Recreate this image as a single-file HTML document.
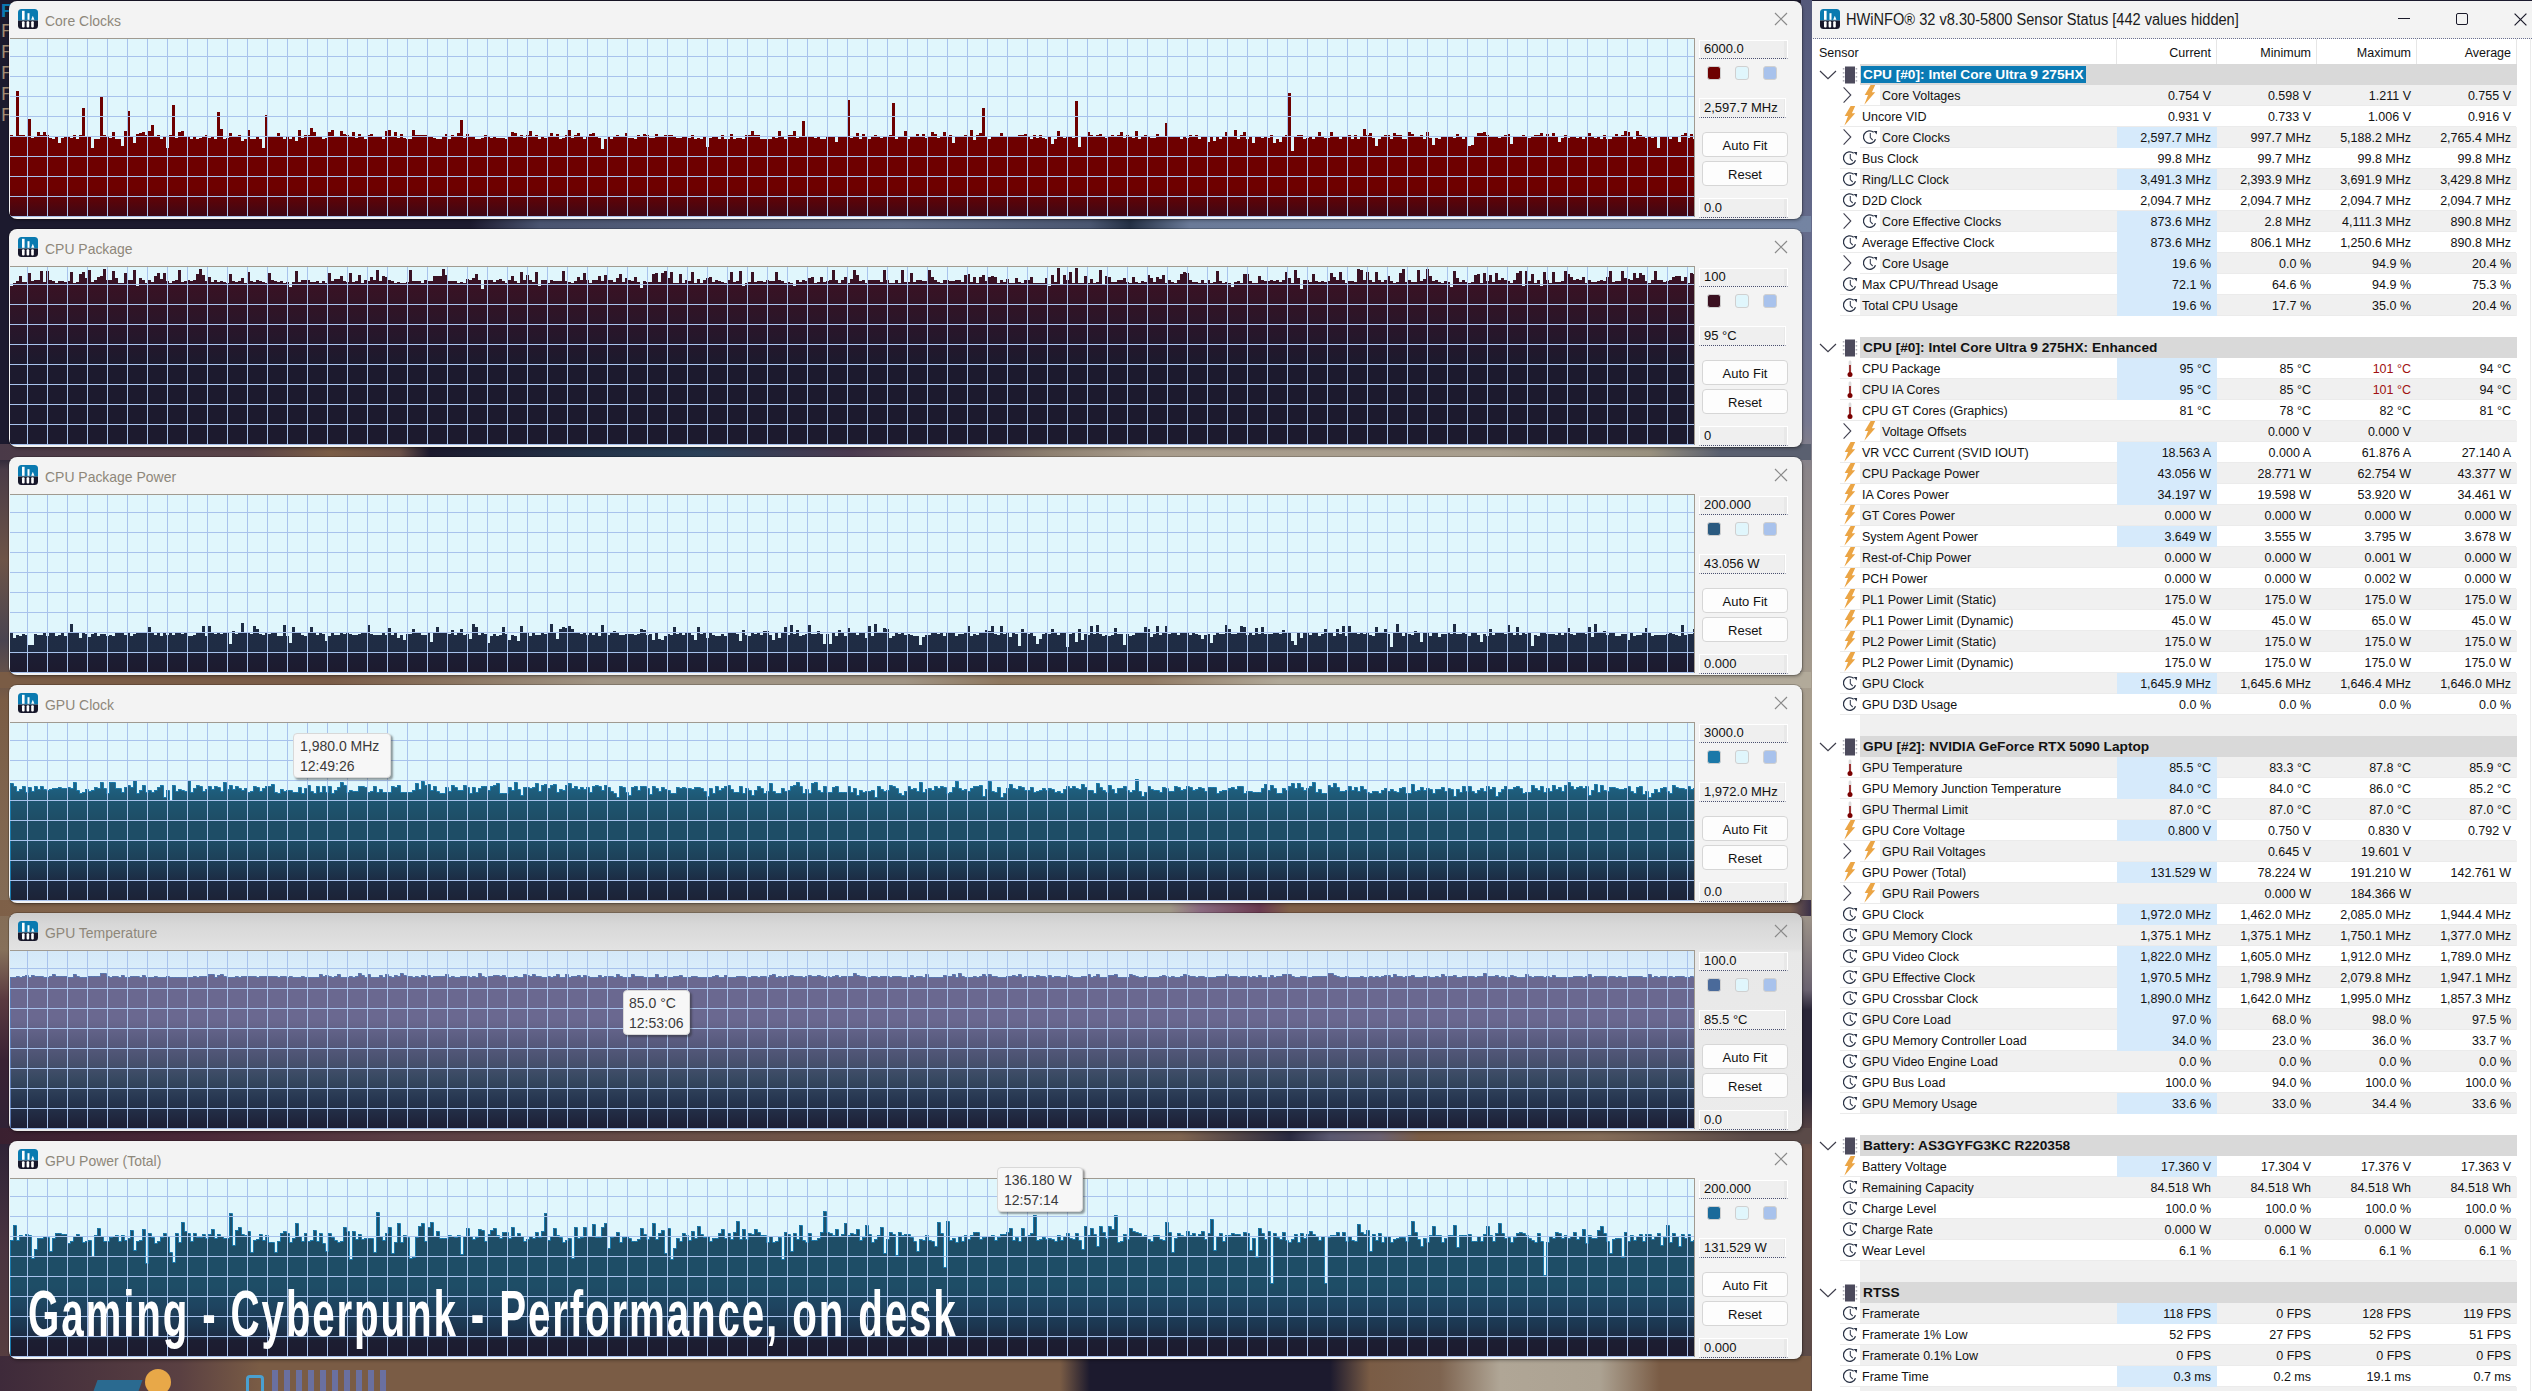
<!DOCTYPE html><html><head><meta charset="utf-8"><style>
*{margin:0;padding:0;box-sizing:border-box}
html,body{width:2532px;height:1391px;overflow:hidden}
body{position:relative;font-family:"Liberation Sans",sans-serif;background:#1c1a2e}
.wall{position:absolute;left:0;top:0;width:1811px;height:1391px;background:#1c1a2e}
.wb{position:absolute}
.tip{position:absolute;background:#f7f7f7;border:1px solid #d8d8d8;border-radius:4px;box-shadow:2px 2px 2px rgba(40,40,40,0.45);
 font-size:14px;line-height:20px;color:#3a3a3a;white-space:nowrap;padding-left:6px}
.gw{position:absolute;left:9px;width:1793px;height:218px;background:#f3f3f3;border-radius:8px;
 box-shadow:0 0 0 1px rgba(0,0,0,0.18),1px 2px 3px rgba(0,0,0,0.25);overflow:hidden}
.gw.inact{background:linear-gradient(180deg,#cdcdcd 0px,#d8d8d8 12px,#e2e2e2 36px,#e8e8e8 40px,#ececec 218px)}
.gicon{position:absolute;left:9px;top:8px;width:20px;height:20px}
.gicon svg{display:block}
.gtitle{position:absolute;left:36px;top:10px;font-size:15px;color:#8e877a;white-space:nowrap;line-height:19px;transform-origin:0 0;transform:scaleX(0.93)}
.gclose{position:absolute;left:1765px;top:11px}
.garea{position:absolute;left:1px;top:37px;width:1685px;height:179px;border-top:1px solid #a09a90;border-right:1px solid #a09a90;overflow:hidden}
.gsvg{display:block;position:absolute;left:0;top:0}
.vbox{position:absolute;left:1690px;width:89px;height:19px;background:linear-gradient(90deg,#efefef 0,#efefef 84px,#e8e8e8 84px);border:1px solid #fff;border-bottom:1px dotted #4a5070;
 font-size:13px;line-height:16px;padding-left:4px;color:#111;white-space:nowrap}
.vmax{top:39px}.vcur{top:97px;width:87px;height:20px;line-height:17px}.vmin{top:197px;height:20px;line-height:18px}
.sw{position:absolute;top:65px;width:14px;height:14px;border-radius:3px;border:1px solid #d0d0d0}
.ovl{position:absolute;left:28px;top:1274px;font-size:65px;font-weight:bold;line-height:80px;letter-spacing:3px;color:#fff;white-space:nowrap;transform-origin:0 0;transform:scaleX(0.62)}
.btn{position:absolute;left:1693px;width:86px;height:25px;background:#fdfdfd;border:1px solid #d6d6d6;border-radius:4px;
 font-size:13px;line-height:25px;text-align:center;color:#111}

.hw{position:absolute;left:1811px;top:1px;width:1721px;height:1390px;background:#fff;overflow:hidden;clip-path:inset(0 0 0 1px)}
.hwtitle{position:absolute;left:0;top:0;width:100%;height:38px;background:#f3f3f3;border-bottom:1px dotted #6a7090}
.hwtt{position:absolute;top:8px;font-size:16px;line-height:22px;color:#1a1a1a;white-space:nowrap;transform-origin:0 0;transform:scaleX(0.912)}
.hdr{position:absolute;top:44px;font-size:12.5px;line-height:16px;color:#111;white-space:nowrap}
.hv{width:95px;text-align:right}
.hsep{position:absolute;top:38px;width:1px;height:25px;background:#e6e6e6}
.rg{position:absolute;left:49px;width:657px;height:21px;background:#d9d9d9}
.rb{position:absolute;height:21px;background:#f0f0f0}
.rs{position:absolute;height:1px;background:#ebebeb}
.hl{position:absolute;left:306px;width:100px;height:21px;background:#d6eafb}
.ic{position:absolute}
.ic svg{display:block}
.gt{position:absolute;font-size:13.7px;font-weight:bold;line-height:17px;padding:0 2px;color:#111;white-space:nowrap}
.gt.sel{background:#0a7ab4;color:#fff}
.tx{position:absolute;font-size:12.5px;line-height:23px;color:#111;white-space:nowrap}
.vv{position:absolute;width:95px;text-align:right;font-size:12.5px;line-height:23px;color:#111;white-space:nowrap}
</style></head><body><div class="wall"></div><div class="wb" style="left:0;top:0;width:10px;height:1391px;background:linear-gradient(180deg,#1c1a2e 0px,#1c1a2e 450px,#4a3c48 470px,#6e5448 560px,#4a4450 640px,#7a5c45 700px,#86705a 950px,#5a3a40 1000px,#3a2234 1060px,#2e2236 1140px,#4a3440 1250px,#5a4040 1391px)"></div><div class="wb" style="left:1801px;top:0;width:11px;height:1391px;background:linear-gradient(180deg,#54597a 0px,#6a7090 300px,#767890 420px,#8a8488 470px,#a89e8e 700px,#a89e8e 900px,#6a6270 990px,#2a2638 1010px,#2a2638 1090px,#6a5048 1150px,#5a4a48 1391px)"></div><div class="wb" style="left:0;top:216px;width:1811px;height:16px;background:linear-gradient(90deg,#1c1a2e 0px,#1c1a2e 470px,#4a5470 540px,#5e6a86 900px,#4a5670 1090px,#243044 1130px,#6a7a98 1190px,#7080a0 1500px,#7484a2 1811px)"></div><div class="wb" style="left:0;top:444px;width:1811px;height:16px;background:linear-gradient(90deg,#4a3a48 0px,#5a4448 250px,#7a5c45 330px,#6a5048 400px,#1c1a2e 430px,#24344a 600px,#2a4058 700px,#4a3a50 850px,#6a5a5a 960px,#8e8070 1050px,#a89c8c 1150px,#a89e8e 1500px,#98907e 1650px,#5a6070 1720px,#5a6070 1811px)"></div><div class="wb" style="left:0;top:672px;width:1811px;height:16px;background:linear-gradient(90deg,#7a5c45 0px,#7a5c48 330px,#8a7460 450px,#a09484 600px,#a09484 905px,#8e7860 1000px,#927c66 1150px,#b0a898 1280px,#b2aa9a 1811px)"></div><div class="wb" style="left:0;top:900px;width:1811px;height:16px;background:linear-gradient(90deg,#7e6048 0px,#8a7058 300px,#92806c 700px,#a09888 950px,#a09888 1170px,#8a6a80 1200px,#6a3a50 1260px,#806048 1290px,#84664e 1700px,#7a6050 1790px,#3a3048 1811px)"></div><div class="wb" style="left:0;top:1128px;width:1811px;height:16px;background:linear-gradient(90deg,#3a2030 0px,#4a2838 200px,#5a3e44 400px,#6a5048 700px,#7a5c45 1000px,#7e6450 1180px,#2a2a40 1290px,#5a5870 1330px,#6a6070 1380px,#7a5c45 1420px,#846c58 1600px,#5a4a48 1750px,#5a4a48 1811px)"></div><div class="wb" style="left:0;top:1356px;width:1811px;height:35px;background:linear-gradient(90deg,#3e2a3a 0px,#5a4042 180px,#7a5c45 260px,#7a5c45 1060px,#1c1a2e 1090px,#1c1a2e 1330px,#7a5c45 1370px,#7e6450 1440px,#b0a696 1500px,#aca292 1600px,#7a5c45 1660px,#7a5c45 1811px)"></div><div class="wb" style="left:145px;top:1369px;width:26px;height:26px;border-radius:50%;background:#e8a848"></div><div class="wb" style="left:95px;top:1380px;width:45px;height:14px;background:#2a6a90;transform:skewX(-20deg)"></div><div class="wb" style="left:246px;top:1375px;width:18px;height:20px;border:3px solid #4aa0d0;border-bottom:none;border-radius:4px 4px 0 0"></div><div class="wb" style="left:272px;top:1370px;width:118px;height:22px;background:repeating-linear-gradient(90deg,#6a70a0 0px,#6a70a0 6px,#7a5c45 6px,#7a5c45 12px)"></div><div class="wb" style="left:1px;top:0;font-size:19px;line-height:21px;color:#0a78b0;font-weight:bold">F</div><div class="wb" style="left:1px;top:20px;font-size:19px;line-height:21px;color:#a08c74;font-family:Liberation Sans">F<br>F<br>F<br>F<br>F</div><div class="gw" style="top:1px"><div class="gicon"><svg width="20" height="20" viewBox="0 0 20 20"><defs><clipPath id="ic"><rect x="0" y="0" width="20" height="20" rx="3.5"/></clipPath></defs><g clip-path="url(#ic)"><rect width="20" height="11.5" fill="#0a7ab0"/><rect y="11.5" width="20" height="8.5" fill="#17172a"/><rect x="4" y="1.8" width="2.6" height="9" fill="#fff"/><rect x="9.5" y="4.2" width="2" height="6.6" fill="#fff"/><path d="M13.2,10.8 L14.8,6.8 L16.4,10.8Z" fill="#fff"/><rect x="4" y="12.3" width="2.6" height="6.2" rx="1" fill="#fff"/><rect x="8.6" y="12.3" width="2.6" height="6.2" rx="1" fill="#fff"/><rect x="13.2" y="12.3" width="2.6" height="6.2" rx="1" fill="#fff"/></g></svg></div><div class="gtitle">Core Clocks</div><svg class="gclose" width="14" height="14" viewBox="0 0 14 14"><path d="M1,1L13,13M13,1L1,13" stroke="#8a8a8a" stroke-width="1.2"/></svg><div class="garea"><svg class="gsvg" width="1685" height="178" viewBox="0 0 1685 178"><defs><linearGradient id="g0" x1="0" y1="0" x2="0" y2="178" gradientUnits="userSpaceOnUse"><stop offset="0.0000" stop-color="#6e0000"/><stop offset="0.8427" stop-color="#6e0000"/><stop offset="1.0000" stop-color="#3c0816"/></linearGradient><linearGradient id="bg0" x1="0" y1="0" x2="0" y2="1"><stop offset="0" stop-color="#e0f6fc"/></linearGradient></defs><rect width="1685" height="178" fill="url(#bg0)"/><path d="M0,178V96H3V97H6V52H9V96H12V96H15V97H18V80H21V99H24V98H27V93H30V96H33V93H36V96H39V99H42V100H45V98H48V104H51V99H54V98H57V97H60V99H63V96H66V100H69V96H72V69H75V97H78V98H81V109H84V100H87V100H90V58H93V96H96V97H99V99H102V93H105V100H108V100H111V107H114V92H117V72H120V97H123V104H126V95H129V94H132V93H135V96H138V92H141V86H144V98H147V96H150V100H153V97H156V109H159V96H162V66H165V99H168V93H171V92H174V98H177V97H180V100H183V97H186V100H189V99H192V97H195V96H198V99H201V97H204V100H207V73H210V90H213V100H216V99H219V94H222V98H225V97H228V96H231V102H234V100H237V91H240V100H243V100H246V97H249V100H252V109H255V76H258V97H261V98H264V97H267V94H270V98H273V100H276V97H279V100H282V98H285V102H288V91H291V99H294V96H297V96H300V89H303V93H306V97H309V97H312V100H315V99H318V93H321V91H324V98H327V98H330V92H333V95H336V96H339V97H342V93H345V99H348V95H351V97H354V100H357V96H360V95H363V97H366V97H369V98H372V100H375V92H378V91H381V97H384V93H387V99H390V95H393V99H396V100H399V100H402V91H405V96H408V96H411V96H414V96H417V97H420V97H423V99H426V100H429V100H432V97H435V95H438V100H441V96H444V97H447V94H450V81H453V99H456V95H459V98H462V98H465V100H468V100H471V99H474V96H477V98H480V99H483V98H486V99H489V99H492V99H495V100H498V97H501V93H504V94H507V98H510V96H513V99H516V96H519V92H522V97H525V96H528V100H531V97H534V99H537V97H540V94H543V97H546V95H549V100H552V99H555V96H558V91H561V99H564V96H567V94H570V98H573V100H576V97H579V95H582V94H585V98H588V99H591V110H594V100H597V98H600V100H603V97H606V96H609V98H612V97H615V94H618V99H621V99H624V100H627V96H630V97H633V95H636V96H639V99H642V99H645V95H648V97H651V98H654V96H657V96H660V96H663V97H666V99H669V99H672V97H675V98H678V99H681V96H684V100H687V99H690V100H693V97H696V108H699V99H702V97H705V98H708V100H711V96H714V100H717V100H720V95H723V100H726V99H729V99H732V100H735V96H738V96H741V92H744V96H747V96H750V100H753V100H756V100H759V100H762V98H765V99H768V92H771V98H774V100H777V96H780V96H783V92H786V99H789V98H792V82H795V98H798V97H801V98H804V99H807V98H810V100H813V100H816V97H819V97H822V97H825V103H828V97H831V97H834V98H837V61H840V99H843V97H846V94H849V100H852V95H855V98H858V100H861V98H864V96H867V98H870V99H873V97H876V98H879V96H882V64H885V100H888V98H891V97H894V92H897V100H900V98H903V97H906V95H909V98H912V95H915V99H918V97H921V93H924V95H927V99H930V97H933V93H936V98H939V96H942V104H945V97H948V97H951V97H954V96H957V97H960V91H963V101H966V96H969V94H972V69H975V97H978V100H981V98H984V98H987V97H990V94H993V97H996V97H999V98H1002V97H1005V98H1008V96H1011V96H1014V95H1017V97H1020V100H1023V96H1026V99H1029V96H1032V99H1035V100H1038V98H1041V105H1044V100H1047V92H1050V97H1053V99H1056V97H1059V98H1062V99H1065V62H1068V108H1071V97H1074V98H1077V93H1080V96H1083V97H1086V96H1089V95H1092V97H1095V99H1098V98H1101V96H1104V98H1107V96H1110V93H1113V99H1116V96H1119V97H1122V99H1125V92H1128V100H1131V97H1134V96H1137V98H1140V99H1143V99H1146V95H1149V98H1152V98H1155V84H1158V98H1161V97H1164V98H1167V97H1170V100H1173V98H1176V99H1179V96H1182V97H1185V96H1188V100H1191V98H1194V98H1197V103H1200V97H1203V102H1206V97H1209V100H1212V97H1215V93H1218V98H1221V98H1224V91H1227V100H1230V96H1233V93H1236V100H1239V97H1242V104H1245V97H1248V98H1251V99H1254V98H1257V99H1260V96H1263V104H1266V100H1269V103H1272V98H1275V96H1278V54H1281V112H1284V98H1287V96H1290V96H1293V100H1296V99H1299V97H1302V100H1305V98H1308V93H1311V97H1314V99H1317V99H1320V93H1323V97H1326V98H1329V100H1332V97H1335V97H1338V96H1341V100H1344V96H1347V100H1350V98H1353V90H1356V96H1359V94H1362V99H1365V107H1368V100H1371V98H1374V96H1377V96H1380V100H1383V94H1386V96H1389V96H1392V100H1395V100H1398V93H1401V95H1404V97H1407V97H1410V96H1413V100H1416V93H1419V99H1422V106H1425V99H1428V100H1431V98H1434V98H1437V98H1440V98H1443V99H1446V95H1449V97H1452V100H1455V97H1458V107H1461V106H1464V98H1467V94H1470V94H1473V93H1476V96H1479V98H1482V98H1485V97H1488V99H1491V97H1494V96H1497V95H1500V105H1503V98H1506V97H1509V97H1512V96H1515V98H1518V99H1521V97H1524V96H1527V96H1530V94H1533V98H1536V95H1539V97H1542V94H1545V97H1548V103H1551V99H1554V96H1557V99H1560V97H1563V97H1566V99H1569V97H1572V100H1575V97H1578V94H1581V97H1584V99H1587V97H1590V100H1593V96H1596V100H1599V100H1602V98H1605V95H1608V98H1611V96H1614V92H1617V93H1620V98H1623V100H1626V92H1629V96H1632V98H1635V99H1638V98H1641V99H1644V97H1647V109H1650V97H1653V97H1656V97H1659V100H1662V98H1665V98H1668V103H1671V96H1674V94H1677V99H1680V95H1683V100H1685V178Z" fill="url(#g0)"/><path d="M17.5,0V178M37.5,0V178M57.5,0V178M77.5,0V178M97.5,0V178M117.5,0V178M137.5,0V178M157.5,0V178M177.5,0V178M197.5,0V178M217.5,0V178M237.5,0V178M257.5,0V178M277.5,0V178M297.5,0V178M317.5,0V178M337.5,0V178M357.5,0V178M377.5,0V178M397.5,0V178M417.5,0V178M437.5,0V178M457.5,0V178M477.5,0V178M497.5,0V178M517.5,0V178M537.5,0V178M557.5,0V178M577.5,0V178M597.5,0V178M617.5,0V178M637.5,0V178M657.5,0V178M677.5,0V178M697.5,0V178M717.5,0V178M737.5,0V178M757.5,0V178M777.5,0V178M797.5,0V178M817.5,0V178M837.5,0V178M857.5,0V178M877.5,0V178M897.5,0V178M917.5,0V178M937.5,0V178M957.5,0V178M977.5,0V178M997.5,0V178M1017.5,0V178M1037.5,0V178M1057.5,0V178M1077.5,0V178M1097.5,0V178M1117.5,0V178M1137.5,0V178M1157.5,0V178M1177.5,0V178M1197.5,0V178M1217.5,0V178M1237.5,0V178M1257.5,0V178M1277.5,0V178M1297.5,0V178M1317.5,0V178M1337.5,0V178M1357.5,0V178M1377.5,0V178M1397.5,0V178M1417.5,0V178M1437.5,0V178M1457.5,0V178M1477.5,0V178M1497.5,0V178M1517.5,0V178M1537.5,0V178M1557.5,0V178M1577.5,0V178M1597.5,0V178M1617.5,0V178M1637.5,0V178M1657.5,0V178M1677.5,0V178M0,177.5H1685M0,157.5H1685M0,137.5H1685M0,117.5H1685M0,97.5H1685M0,77.5H1685M0,57.5H1685M0,37.5H1685M0,17.5H1685" stroke="#a8c2ec" stroke-width="1" fill="none"/></svg></div><div class="vbox vmax">6000.0</div><div class="sw" style="left:1698px;background:#6e0000"></div><div class="sw" style="left:1726px;background:#e0f6fc"></div><div class="sw" style="left:1754px;background:#a8c2ec"></div><div class="vbox vcur">2,597.7 MHz</div><div class="btn" style="top:131px">Auto Fit</div><div class="btn" style="top:160px">Reset</div><div class="vbox vmin">0.0</div></div><div class="gw" style="top:229px"><div class="gicon"><svg width="20" height="20" viewBox="0 0 20 20"><defs><clipPath id="ic"><rect x="0" y="0" width="20" height="20" rx="3.5"/></clipPath></defs><g clip-path="url(#ic)"><rect width="20" height="11.5" fill="#0a7ab0"/><rect y="11.5" width="20" height="8.5" fill="#17172a"/><rect x="4" y="1.8" width="2.6" height="9" fill="#fff"/><rect x="9.5" y="4.2" width="2" height="6.6" fill="#fff"/><path d="M13.2,10.8 L14.8,6.8 L16.4,10.8Z" fill="#fff"/><rect x="4" y="12.3" width="2.6" height="6.2" rx="1" fill="#fff"/><rect x="8.6" y="12.3" width="2.6" height="6.2" rx="1" fill="#fff"/><rect x="13.2" y="12.3" width="2.6" height="6.2" rx="1" fill="#fff"/></g></svg></div><div class="gtitle">CPU Package</div><svg class="gclose" width="14" height="14" viewBox="0 0 14 14"><path d="M1,1L13,13M13,1L1,13" stroke="#8a8a8a" stroke-width="1.2"/></svg><div class="garea"><svg class="gsvg" width="1685" height="178" viewBox="0 0 1685 178"><defs><linearGradient id="g1" x1="0" y1="0" x2="0" y2="178" gradientUnits="userSpaceOnUse"><stop offset="0.0000" stop-color="#3a1224"/><stop offset="0.1124" stop-color="#381224"/><stop offset="0.2247" stop-color="#301426"/><stop offset="0.3371" stop-color="#29162a"/><stop offset="0.4494" stop-color="#22182c"/><stop offset="0.5506" stop-color="#1c1a2e"/><stop offset="1.0000" stop-color="#1c1a2e"/></linearGradient><linearGradient id="bg1" x1="0" y1="0" x2="0" y2="1"><stop offset="0" stop-color="#e0f6fc"/></linearGradient></defs><rect width="1685" height="178" fill="url(#bg1)"/><path d="M0,178V19H3V16H6V14H9V9H12V15H15V15H18V6H21V14H24V13H27V13H30V4H33V15H36V4H39V13H42V14H45V16H48V14H51V14H54V15H57V14H60V5H63V16H66V15H69V7H72V5H75V11H78V3H81V15H84V13H87V10H90V9H93V2H96V13H99V13H102V4H105V11H108V16H111V16H114V6H117V13H120V13H123V3H126V19H129V11H132V13H135V16H138V13H141V15H144V9H147V6H150V12H153V6H156V14H159V16H162V14H165V13H168V3H171V15H174V14H177V13H180V14H183V13H186V7H189V2H192V8H195V14H198V10H201V15H204V13H207V15H210V14H213V15H216V16H219V7H222V14H225V15H228V14H231V11H234V16H237V5H240V14H243V15H246V13H249V14H252V15H255V16H258V6H261V13H264V14H267V15H270V14H273V16H276V15H279V20H282V15H285V4H288V15H291V13H294V13H297V13H300V15H303V15H306V14H309V16H312V14H315V16H318V6H321V14H324V12H327V12H330V9H333V14H336V15H339V6H342V15H345V14H348V8H351V16H354V13H357V14H360V10H363V13H366V3H369V14H372V9H375V10H378V13H381V14H384V16H387V15H390V16H393V16H396V15H399V3H402V14H405V14H408V14H411V16H414V13H417V14H420V14H423V9H426V9H429V9H432V2H435V8H438V14H441V14H444V14H447V16H450V15H453V16H456V12H459V13H462V11H465V7H468V13H471V22H474V13H477V13H480V13H483V15H486V13H489V12H492V14H495V16H498V13H501V9H504V14H507V16H510V5H513V13H516V8H519V13H522V15H525V5H528V19H531V13H534V13H537V16H540V13H543V14H546V14H549V14H552V4H555V14H558V15H561V16H564V14H567V10H570V13H573V6H576V13H579V16H582V13H585V13H588V9H591V14H594V8H597V13H600V13H603V15H606V11H609V7H612V15H615V11H618V13H621V14H624V10H627V15H630V21H633V14H636V15H639V15H642V7H645V6H648V15H651V6H654V4H657V11H660V5H663V16H666V16H669V7H672V16H675V13H678V14H681V5H684V16H687V12H690V16H693V13H696V11H699V10H702V15H705V13H708V14H711V15H714V16H717V13H720V5H723V15H726V14H729V4H732V19H735V16H738V15H741V5H744V15H747V14H750V14H753V15H756V13H759V14H762V14H765V5H768V13H771V14H774V16H777V15H780V16H783V19H786V13H789V15H792V13H795V14H798V11H801V10H804V16H807V15H810V10H813V15H816V14H819V13H822V3H825V13H828V16H831V13H834V10H837V16H840V12H843V3H846V8H849V14H852V13H855V16H858V13H861V13H864V13H867V13H870V15H873V3H876V13H879V16H882V16H885V13H888V16H891V3H894V15H897V15H900V6H903V15H906V13H909V13H912V14H915V14H918V3H921V10H924V13H927V15H930V16H933V13H936V13H939V14H942V14H945V13H948V13H951V15H954V8H957V7H960V15H963V10H966V16H969V10H972V8H975V14H978V10H981V9H984V10H987V16H990V13H993V15H996V12H999V16H1002V16H1005V11H1008V15H1011V16H1014V13H1017V13H1020V10H1023V16H1026V16H1029V16H1032V16H1035V11H1038V19H1041V8H1044V15H1047V1H1050V18H1053V8H1056V13H1059V5H1062V16H1065V1H1068V16H1071V16H1074V9H1077V16H1080V12H1083V16H1086V15H1089V3H1092V18H1095V9H1098V10H1101V15H1104V15H1107V13H1110V13H1113V11H1116V15H1119V16H1122V10H1125V15H1128V16H1131V14H1134V15H1137V8H1140V11H1143V15H1146V10H1149V12H1152V8H1155V16H1158V13H1161V15H1164V16H1167V13H1170V7H1173V5H1176V6H1179V13H1182V15H1185V15H1188V16H1191V13H1194V16H1197V13H1200V16H1203V15H1206V4H1209V14H1212V16H1215V15H1218V16H1221V20H1224V15H1227V14H1230V16H1233V7H1236V7H1239V14H1242V16H1245V16H1248V9H1251V13H1254V14H1257V14H1260V13H1263V14H1266V13H1269V15H1272V13H1275V5H1278V11H1281V16H1284V3H1287V11H1290V22H1293V13H1296V13H1299V15H1302V7H1305V14H1308V15H1311V14H1314V15H1317V14H1320V6H1323V10H1326V13H1329V5H1332V13H1335V16H1338V14H1341V14H1344V15H1347V2H1350V3H1353V13H1356V5H1359V13H1362V15H1365V5H1368V13H1371V15H1374V13H1377V9H1380V14H1383V16H1386V15H1389V6H1392V2H1395V15H1398V13H1401V15H1404V15H1407V3H1410V14H1413V12H1416V2H1419V9H1422V14H1425V13H1428V15H1431V16H1434V14H1437V15H1440V20H1443V4H1446V11H1449V15H1452V13H1455V15H1458V16H1461V15H1464V8H1467V7H1470V16H1473V6H1476V14H1479V8H1482V15H1485V6H1488V13H1491V11H1494V13H1497V14H1500V16H1503V13H1506V6H1509V4H1512V19H1515V4H1518V14H1521V7H1524V16H1527V13H1530V19H1533V5H1536V13H1539V16H1542V5H1545V15H1548V15H1551V14H1554V4H1557V7H1560V10H1563V13H1566V12H1569V13H1572V10H1575V16H1578V13H1581V15H1584V15H1587V14H1590V13H1593V14H1596V10H1599V4H1602V15H1605V14H1608V14H1611V4H1614V11H1617V12H1620V13H1623V6H1626V11H1629V6H1632V8H1635V14H1638V16H1641V13H1644V4H1647V13H1650V13H1653V15H1656V14H1659V13H1662V10H1665V9H1668V9H1671V14H1674V10H1677V16H1680V6H1683V7H1685V178Z" fill="url(#g1)"/><path d="M17.5,0V178M37.5,0V178M57.5,0V178M77.5,0V178M97.5,0V178M117.5,0V178M137.5,0V178M157.5,0V178M177.5,0V178M197.5,0V178M217.5,0V178M237.5,0V178M257.5,0V178M277.5,0V178M297.5,0V178M317.5,0V178M337.5,0V178M357.5,0V178M377.5,0V178M397.5,0V178M417.5,0V178M437.5,0V178M457.5,0V178M477.5,0V178M497.5,0V178M517.5,0V178M537.5,0V178M557.5,0V178M577.5,0V178M597.5,0V178M617.5,0V178M637.5,0V178M657.5,0V178M677.5,0V178M697.5,0V178M717.5,0V178M737.5,0V178M757.5,0V178M777.5,0V178M797.5,0V178M817.5,0V178M837.5,0V178M857.5,0V178M877.5,0V178M897.5,0V178M917.5,0V178M937.5,0V178M957.5,0V178M977.5,0V178M997.5,0V178M1017.5,0V178M1037.5,0V178M1057.5,0V178M1077.5,0V178M1097.5,0V178M1117.5,0V178M1137.5,0V178M1157.5,0V178M1177.5,0V178M1197.5,0V178M1217.5,0V178M1237.5,0V178M1257.5,0V178M1277.5,0V178M1297.5,0V178M1317.5,0V178M1337.5,0V178M1357.5,0V178M1377.5,0V178M1397.5,0V178M1417.5,0V178M1437.5,0V178M1457.5,0V178M1477.5,0V178M1497.5,0V178M1517.5,0V178M1537.5,0V178M1557.5,0V178M1577.5,0V178M1597.5,0V178M1617.5,0V178M1637.5,0V178M1657.5,0V178M1677.5,0V178M0,177.5H1685M0,157.5H1685M0,137.5H1685M0,117.5H1685M0,97.5H1685M0,77.5H1685M0,57.5H1685M0,37.5H1685M0,17.5H1685" stroke="#a8c2ec" stroke-width="1" fill="none"/></svg></div><div class="vbox vmax">100</div><div class="sw" style="left:1698px;background:#3a1020"></div><div class="sw" style="left:1726px;background:#e0f6fc"></div><div class="sw" style="left:1754px;background:#a8c2ec"></div><div class="vbox vcur">95 °C</div><div class="btn" style="top:131px">Auto Fit</div><div class="btn" style="top:160px">Reset</div><div class="vbox vmin">0</div></div><div class="gw" style="top:457px"><div class="gicon"><svg width="20" height="20" viewBox="0 0 20 20"><defs><clipPath id="ic"><rect x="0" y="0" width="20" height="20" rx="3.5"/></clipPath></defs><g clip-path="url(#ic)"><rect width="20" height="11.5" fill="#0a7ab0"/><rect y="11.5" width="20" height="8.5" fill="#17172a"/><rect x="4" y="1.8" width="2.6" height="9" fill="#fff"/><rect x="9.5" y="4.2" width="2" height="6.6" fill="#fff"/><path d="M13.2,10.8 L14.8,6.8 L16.4,10.8Z" fill="#fff"/><rect x="4" y="12.3" width="2.6" height="6.2" rx="1" fill="#fff"/><rect x="8.6" y="12.3" width="2.6" height="6.2" rx="1" fill="#fff"/><rect x="13.2" y="12.3" width="2.6" height="6.2" rx="1" fill="#fff"/></g></svg></div><div class="gtitle">CPU Package Power</div><svg class="gclose" width="14" height="14" viewBox="0 0 14 14"><path d="M1,1L13,13M13,1L1,13" stroke="#8a8a8a" stroke-width="1.2"/></svg><div class="garea"><svg class="gsvg" width="1685" height="178" viewBox="0 0 1685 178"><defs><linearGradient id="g2" x1="0" y1="0" x2="0" y2="178" gradientUnits="userSpaceOnUse"><stop offset="0.0000" stop-color="#203048"/><stop offset="0.8820" stop-color="#1f2c44"/><stop offset="0.8933" stop-color="#1c1e34"/><stop offset="1.0000" stop-color="#1c1a2e"/></linearGradient><linearGradient id="bg2" x1="0" y1="0" x2="0" y2="1"><stop offset="0" stop-color="#e0f6fc"/></linearGradient></defs><rect width="1685" height="178" fill="url(#bg2)"/><path d="M0,178V138H3V143H6V140H9V141H12V139H15V140H18V150H21V150H24V139H27V140H30V140H33V137H36V141H39V138H42V138H45V141H48V140H51V138H54V141H57V138H60V129H63V137H66V138H69V143H72V138H75V139H78V142H81V139H84V137H87V141H90V139H93V139H96V141H99V140H102V141H105V137H108V137H111V137H114V140H117V137H120V141H123V139H126V138H129V138H132V137H135V138H138V132H141V137H144V140H147V138H150V141H153V137H156V140H159V138H162V140H165V138H168V138H171V139H174V137H177V141H180V141H183V140H186V138H189V137H192V131H195V141H198V131H201V138H204V139H207V138H210V139H213V138H216V138H219V149H222V136H225V139H228V137H231V128H234V137H237V138H240V139H243V131H246V134H249V139H252V140H255V138H258V139H261V138H264V137H267V141H270V141H273V130H276V141H279V148H282V132H285V137H288V137H291V140H294V141H297V137H300V132H303V137H306V140H309V138H312V139H315V146H318V141H321V138H324V140H327V140H330V137H333V139H336V138H339V139H342V140H345V140H348V139H351V137H354V138H357V130H360V139H363V140H366V140H369V140H372V138H375V140H378V133H381V140H384V138H387V143H390V140H393V145H396V139H399V139H402V134H405V137H408V137H411V140H414V140H417V138H420V147H423V138H426V132H429V138H432V137H435V138H438V139H441V135H444V140H447V138H450V134H453V140H456V139H459V144H462V129H465V132H468V140H471V138H474V139H477V148H480V141H483V139H486V141H489V140H492V132H495V139H498V145H501V140H504V141H507V146H510V131H513V138H516V138H519V141H522V138H525V140H528V140H531V138H534V139H537V138H540V129H543V138H546V144H549V134H552V132H555V133H558V131H561V134H564V137H567V137H570V139H573V137H576V140H579V138H582V140H585V137H588V141H591V130H594V138H597V140H600V137H603V136H606V137H609V140H612V140H615V139H618V139H621V139H624V140H627V139H630V134H633V135H636V140H639V139H642V145H645V138H648V144H651V145H654V141H657V139H660V140H663V132H666V139H669V138H672V140H675V138H678V137H681V140H684V145H687V132H690V139H693V138H696V143H699V138H702V140H705V141H708V141H711V139H714V141H717V137H720V138H723V137H726V139H729V146H732V135H735V140H738V141H741V138H744V139H747V138H750V140H753V136H756V136H759V140H762V145H765V137H768V143H771V138H774V132H777V140H780V130H783V139H786V135H789V141H792V140H795V139H798V130H801V139H804V139H807V136H810V139H813V149H816V139H819V149H822V138H825V141H828V135H831V138H834V141H837V133H840V137H843V137H846V140H849V137H852V137H855V143H858V131H861V141H864V129H867V138H870V137H873V133H876V134H879V143H882V141H885V138H888V139H891V137H894V140H897V139H900V140H903V141H906V141H909V150H912V142H915V140H918V140H921V137H924V138H927V139H930V138H933V141H936V138H939V137H942V138H945V141H948V139H951V139H954V137H957V131H960V141H963V139H966V140H969V138H972V138H975V135H978V136H981V131H984V139H987V140H990V131H993V139H996V138H999V142H1002V138H1005V139H1008V151H1011V134H1014V138H1017V139H1020V138H1023V141H1026V149H1029V144H1032V139H1035V138H1038V139H1041V134H1044V138H1047V140H1050V137H1053V138H1056V152H1059V139H1062V137H1065V147H1068V134H1071V145H1074V139H1077V140H1080V131H1083V139H1086V130H1089V139H1092V141H1095V140H1098V141H1101V140H1104V133H1107V139H1110V139H1113V150H1116V139H1119V141H1122V140H1125V137H1128V138H1131V138H1134V132H1137V134H1140V142H1143V139H1146V131H1149V140H1152V137H1155V131H1158V139H1161V138H1164V138H1167V140H1170V137H1173V138H1176V138H1179V140H1182V138H1185V139H1188V140H1191V144H1194V140H1197V139H1200V148H1203V140H1206V138H1209V139H1212V139H1215V130H1218V134H1221V139H1224V139H1227V137H1230V131H1233V132H1236V140H1239V138H1242V140H1245V133H1248V139H1251V132H1254V139H1257V139H1260V139H1263V137H1266V137H1269V139H1272V135H1275V137H1278V138H1281V146H1284V150H1287V138H1290V143H1293V137H1296V137H1299V140H1302V137H1305V137H1308V141H1311V139H1314V134H1317V138H1320V138H1323V141H1326V134H1329V139H1332V131H1335V141H1338V131H1341V138H1344V138H1347V139H1350V137H1353V139H1356V138H1359V140H1362V141H1365V132H1368V137H1371V138H1374V134H1377V139H1380V152H1383V138H1386V129H1389V138H1392V141H1395V138H1398V139H1401V140H1404V136H1407V138H1410V147H1413V137H1416V138H1419V141H1422V137H1425V138H1428V142H1431V139H1434V139H1437V138H1440V139H1443V129H1446V139H1449V139H1452V137H1455V139H1458V141H1461V138H1464V137H1467V140H1470V147H1473V139H1476V141H1479V134H1482V140H1485V137H1488V137H1491V138H1494V139H1497V130H1500V138H1503V140H1506V132H1509V140H1512V138H1515V139H1518V138H1521V151H1524V140H1527V141H1530V137H1533V138H1536V139H1539V139H1542V139H1545V140H1548V137H1551V140H1554V138H1557V133H1560V139H1563V140H1566V137H1569V137H1572V138H1575V139H1578V132H1581V142H1584V129H1587V138H1590V137H1593V136H1596V140H1599V138H1602V137H1605V141H1608V141H1611V139H1614V139H1617V145H1620V138H1623V141H1626V140H1629V140H1632V138H1635V133H1638V138H1641V141H1644V140H1647V140H1650V140H1653V140H1656V139H1659V138H1662V139H1665V140H1668V141H1671V130H1674V140H1677V139H1680V139H1683V134H1685V178Z" fill="url(#g2)"/><path d="M17.5,0V178M37.5,0V178M57.5,0V178M77.5,0V178M97.5,0V178M117.5,0V178M137.5,0V178M157.5,0V178M177.5,0V178M197.5,0V178M217.5,0V178M237.5,0V178M257.5,0V178M277.5,0V178M297.5,0V178M317.5,0V178M337.5,0V178M357.5,0V178M377.5,0V178M397.5,0V178M417.5,0V178M437.5,0V178M457.5,0V178M477.5,0V178M497.5,0V178M517.5,0V178M537.5,0V178M557.5,0V178M577.5,0V178M597.5,0V178M617.5,0V178M637.5,0V178M657.5,0V178M677.5,0V178M697.5,0V178M717.5,0V178M737.5,0V178M757.5,0V178M777.5,0V178M797.5,0V178M817.5,0V178M837.5,0V178M857.5,0V178M877.5,0V178M897.5,0V178M917.5,0V178M937.5,0V178M957.5,0V178M977.5,0V178M997.5,0V178M1017.5,0V178M1037.5,0V178M1057.5,0V178M1077.5,0V178M1097.5,0V178M1117.5,0V178M1137.5,0V178M1157.5,0V178M1177.5,0V178M1197.5,0V178M1217.5,0V178M1237.5,0V178M1257.5,0V178M1277.5,0V178M1297.5,0V178M1317.5,0V178M1337.5,0V178M1357.5,0V178M1377.5,0V178M1397.5,0V178M1417.5,0V178M1437.5,0V178M1457.5,0V178M1477.5,0V178M1497.5,0V178M1517.5,0V178M1537.5,0V178M1557.5,0V178M1577.5,0V178M1597.5,0V178M1617.5,0V178M1637.5,0V178M1657.5,0V178M1677.5,0V178M0,177.5H1685M0,157.5H1685M0,137.5H1685M0,117.5H1685M0,97.5H1685M0,77.5H1685M0,57.5H1685M0,37.5H1685M0,17.5H1685" stroke="#a8c2ec" stroke-width="1" fill="none"/></svg></div><div class="vbox vmax">200.000</div><div class="sw" style="left:1698px;background:#2a5a80"></div><div class="sw" style="left:1726px;background:#e0f6fc"></div><div class="sw" style="left:1754px;background:#a8c2ec"></div><div class="vbox vcur">43.056 W</div><div class="btn" style="top:131px">Auto Fit</div><div class="btn" style="top:160px">Reset</div><div class="vbox vmin">0.000</div></div><div class="gw" style="top:685px"><div class="gicon"><svg width="20" height="20" viewBox="0 0 20 20"><defs><clipPath id="ic"><rect x="0" y="0" width="20" height="20" rx="3.5"/></clipPath></defs><g clip-path="url(#ic)"><rect width="20" height="11.5" fill="#0a7ab0"/><rect y="11.5" width="20" height="8.5" fill="#17172a"/><rect x="4" y="1.8" width="2.6" height="9" fill="#fff"/><rect x="9.5" y="4.2" width="2" height="6.6" fill="#fff"/><path d="M13.2,10.8 L14.8,6.8 L16.4,10.8Z" fill="#fff"/><rect x="4" y="12.3" width="2.6" height="6.2" rx="1" fill="#fff"/><rect x="8.6" y="12.3" width="2.6" height="6.2" rx="1" fill="#fff"/><rect x="13.2" y="12.3" width="2.6" height="6.2" rx="1" fill="#fff"/></g></svg></div><div class="gtitle">GPU Clock</div><svg class="gclose" width="14" height="14" viewBox="0 0 14 14"><path d="M1,1L13,13M13,1L1,13" stroke="#8a8a8a" stroke-width="1.2"/></svg><div class="garea"><svg class="gsvg" width="1685" height="178" viewBox="0 0 1685 178"><defs><linearGradient id="g3" x1="0" y1="0" x2="0" y2="178" gradientUnits="userSpaceOnUse"><stop offset="0.0000" stop-color="#1e6588"/><stop offset="0.3258" stop-color="#1e6588"/><stop offset="0.4382" stop-color="#1e5570"/><stop offset="0.5449" stop-color="#1e4d66"/><stop offset="0.6573" stop-color="#1e4d66"/><stop offset="0.7697" stop-color="#1d4058"/><stop offset="0.8820" stop-color="#1c2c44"/><stop offset="1.0000" stop-color="#1c2236"/></linearGradient><linearGradient id="bg3" x1="0" y1="0" x2="0" y2="1"><stop offset="0" stop-color="#e0f6fc"/></linearGradient></defs><rect width="1685" height="178" fill="url(#bg3)"/><path d="M0,178V60H3V63H6V68H9V66H12V63H15V69H18V64H21V68H24V63H27V66H30V63H33V66H36V67H39V66H42V65H45V65H48V64H51V65H54V65H57V64H60V65H63V59H66V67H69V70H72V69H75V66H78V68H81V67H84V64H87V65H90V59H93V65H96V70H99V59H102V59H105V65H108V65H111V69H114V64H117V62H120V64H123V57H126V70H129V67H132V62H135V69H138V67H141V69H144V67H147V64H150V62H153V74H156V67H159V77H162V62H165V68H168V66H171V67H174V68H177V57H180V69H183V65H186V62H189V63H192V68H195V66H198V63H201V66H204V63H207V64H210V68H213V59H216V66H219V62H222V66H225V63H228V65H231V67H234V65H237V69H240V68H243V63H246V64H249V68H252V65H255V63H258V63H261V61H264V69H267V70H270V66H273V68H276V67H279V67H282V69H285V69H288V64H291V70H294V65H297V62H300V68H303V70H306V63H309V69H312V63H315V69H318V63H321V70H324V67H327V64H330V59H333V62H336V69H339V67H342V68H345V68H348V63H351V63H354V64H357V69H360V68H363V63H366V69H369V66H372V69H375V69H378V69H381V63H384V64H387V62H390V69H393V69H396V69H399V69H402V67H405V60H408V66H411V58H414V62H417V61H420V67H423V63H426V68H429V70H432V70H435V64H438V68H441V62H444V64H447V67H450V67H453V62H456V64H459V70H462V64H465V69H468V65H471V63H474V63H477V67H480V63H483V62H486V60H489V70H492V70H495V70H498V64H501V67H504V59H507V66H510V72H513V64H516V64H519V65H522V64H525V60H528V68H531V62H534V61H537V65H540V62H543V61H546V69H549V66H552V67H555V62H558V60H561V65H564V63H567V66H570V64H573V66H576V64H579V69H582V63H585V62H588V63H591V67H594V62H597V64H600V68H603V70H606V74H609V63H612V64H615V69H618V72H621V64H624V63H627V67H630V63H633V63H636V65H639V71H642V63H645V65H648V68H651V64H654V66H657V67H660V70H663V70H666V64H669V65H672V64H675V65H678V65H681V66H684V64H687V64H690V65H693V68H696V73H699V65H702V70H705V63H708V67H711V65H714V63H717V62H720V66H723V69H726V69H729V63H732V70H735V65H738V67H741V72H744V67H747V63H750V65H753V70H756V68H759V60H762V68H765V70H768V70H771V65H774V68H777V67H780V63H783V62H786V59H789V63H792V70H795V66H798V70H801V60H804V59H807V67H810V69H813V63H816V69H819V69H822V64H825V63H828V69H831V69H834V69H837V63H840V69H843V65H846V72H849V67H852V69H855V68H858V68H861V67H864V74H867V63H870V66H873V68H876V67H879V62H882V63H885V65H888V70H891V72H894V68H897V63H900V66H903V65H906V68H909V59H912V69H915V66H918V65H921V67H924V63H927V65H930V63H933V64H936V70H939V69H942V64H945V58H948V65H951V67H954V66H957V68H960V65H963V63H966V63H969V62H972V73H975V66H978V58H981V68H984V69H987V64H990V74H993V70H996V65H999V61H1002V65H1005V66H1008V63H1011V64H1014V67H1017V67H1020V64H1023V69H1026V68H1029V67H1032V65H1035V67H1038V65H1041V66H1044V69H1047V68H1050V70H1053V66H1056V63H1059V65H1062V63H1065V65H1068V66H1071V61H1074V64H1077V67H1080V67H1083V70H1086V60H1089V64H1092V67H1095V69H1098V62H1101V66H1104V70H1107V65H1110V65H1113V63H1116V67H1119V69H1122V67H1125V56H1128V68H1131V73H1134V69H1137V63H1140V66H1143V67H1146V67H1149V69H1152V64H1155V65H1158V68H1161V68H1164V63H1167V64H1170V67H1173V66H1176V63H1179V64H1182V67H1185V66H1188V64H1191V65H1194V68H1197V64H1200V64H1203V64H1206V70H1209V68H1212V67H1215V67H1218V65H1221V64H1224V66H1227V63H1230V63H1233V70H1236V68H1239V68H1242V69H1245V69H1248V69H1251V65H1254V61H1257V67H1260V62H1263V65H1266V70H1269V70H1272V65H1275V67H1278V63H1281V60H1284V65H1287V60H1290V64H1293V67H1296V65H1299V63H1302V59H1305V69H1308V66H1311V70H1314V70H1317V62H1320V64H1323V60H1326V64H1329V68H1332V68H1335V67H1338V63H1341V67H1344V64H1347V68H1350V63H1353V66H1356V69H1359V70H1362V68H1365V68H1368V70H1371V67H1374V65H1377V68H1380V66H1383V68H1386V69H1389V65H1392V64H1395V70H1398V70H1401V61H1404V68H1407V67H1410V64H1413V67H1416V65H1419V66H1422V70H1425V66H1428V66H1431V64H1434V68H1437V65H1440V66H1443V73H1446V66H1449V69H1452V63H1455V68H1458V63H1461V68H1464V70H1467V67H1470V65H1473V68H1476V63H1479V66H1482V64H1485V73H1488V69H1491V66H1494V63H1497V66H1500V66H1503V64H1506V63H1509V65H1512V70H1515V69H1518V69H1521V62H1524V65H1527V67H1530V63H1533V69H1536V65H1539V68H1542V62H1545V66H1548V64H1551V68H1554V62H1557V59H1560V63H1563V66H1566V64H1569V63H1572V65H1575V63H1578V72H1581V67H1584V61H1587V69H1590V62H1593V67H1596V68H1599V64H1602V64H1605V65H1608V66H1611V66H1614V65H1617V63H1620V68H1623V70H1626V64H1629V63H1632V71H1635V68H1638V74H1641V70H1644V66H1647V69H1650V65H1653V64H1656V68H1659V70H1662V62H1665V64H1668V65H1671V65H1674V66H1677V63H1680V66H1683V65H1685V178Z" fill="url(#g3)"/><path d="M0,178V60H3V63H6V68H9V66H12V63H15V69H18V64H21V68H24V63H27V66H30V63H33V66H36V67H39V66H42V65H45V65H48V64H51V65H54V65H57V64H60V65H63V59H66V67H69V70H72V69H75V66H78V68H81V67H84V64H87V65H90V59H93V65H96V70H99V59H102V59H105V65H108V65H111V69H114V64H117V62H120V64H123V57H126V70H129V67H132V62H135V69H138V67H141V69H144V67H147V64H150V62H153V74H156V67H159V77H162V62H165V68H168V66H171V67H174V68H177V57H180V69H183V65H186V62H189V63H192V68H195V66H198V63H201V66H204V63H207V64H210V68H213V59H216V66H219V62H222V66H225V63H228V65H231V67H234V65H237V69H240V68H243V63H246V64H249V68H252V65H255V63H258V63H261V61H264V69H267V70H270V66H273V68H276V67H279V67H282V69H285V69H288V64H291V70H294V65H297V62H300V68H303V70H306V63H309V69H312V63H315V69H318V63H321V70H324V67H327V64H330V59H333V62H336V69H339V67H342V68H345V68H348V63H351V63H354V64H357V69H360V68H363V63H366V69H369V66H372V69H375V69H378V69H381V63H384V64H387V62H390V69H393V69H396V69H399V69H402V67H405V60H408V66H411V58H414V62H417V61H420V67H423V63H426V68H429V70H432V70H435V64H438V68H441V62H444V64H447V67H450V67H453V62H456V64H459V70H462V64H465V69H468V65H471V63H474V63H477V67H480V63H483V62H486V60H489V70H492V70H495V70H498V64H501V67H504V59H507V66H510V72H513V64H516V64H519V65H522V64H525V60H528V68H531V62H534V61H537V65H540V62H543V61H546V69H549V66H552V67H555V62H558V60H561V65H564V63H567V66H570V64H573V66H576V64H579V69H582V63H585V62H588V63H591V67H594V62H597V64H600V68H603V70H606V74H609V63H612V64H615V69H618V72H621V64H624V63H627V67H630V63H633V63H636V65H639V71H642V63H645V65H648V68H651V64H654V66H657V67H660V70H663V70H666V64H669V65H672V64H675V65H678V65H681V66H684V64H687V64H690V65H693V68H696V73H699V65H702V70H705V63H708V67H711V65H714V63H717V62H720V66H723V69H726V69H729V63H732V70H735V65H738V67H741V72H744V67H747V63H750V65H753V70H756V68H759V60H762V68H765V70H768V70H771V65H774V68H777V67H780V63H783V62H786V59H789V63H792V70H795V66H798V70H801V60H804V59H807V67H810V69H813V63H816V69H819V69H822V64H825V63H828V69H831V69H834V69H837V63H840V69H843V65H846V72H849V67H852V69H855V68H858V68H861V67H864V74H867V63H870V66H873V68H876V67H879V62H882V63H885V65H888V70H891V72H894V68H897V63H900V66H903V65H906V68H909V59H912V69H915V66H918V65H921V67H924V63H927V65H930V63H933V64H936V70H939V69H942V64H945V58H948V65H951V67H954V66H957V68H960V65H963V63H966V63H969V62H972V73H975V66H978V58H981V68H984V69H987V64H990V74H993V70H996V65H999V61H1002V65H1005V66H1008V63H1011V64H1014V67H1017V67H1020V64H1023V69H1026V68H1029V67H1032V65H1035V67H1038V65H1041V66H1044V69H1047V68H1050V70H1053V66H1056V63H1059V65H1062V63H1065V65H1068V66H1071V61H1074V64H1077V67H1080V67H1083V70H1086V60H1089V64H1092V67H1095V69H1098V62H1101V66H1104V70H1107V65H1110V65H1113V63H1116V67H1119V69H1122V67H1125V56H1128V68H1131V73H1134V69H1137V63H1140V66H1143V67H1146V67H1149V69H1152V64H1155V65H1158V68H1161V68H1164V63H1167V64H1170V67H1173V66H1176V63H1179V64H1182V67H1185V66H1188V64H1191V65H1194V68H1197V64H1200V64H1203V64H1206V70H1209V68H1212V67H1215V67H1218V65H1221V64H1224V66H1227V63H1230V63H1233V70H1236V68H1239V68H1242V69H1245V69H1248V69H1251V65H1254V61H1257V67H1260V62H1263V65H1266V70H1269V70H1272V65H1275V67H1278V63H1281V60H1284V65H1287V60H1290V64H1293V67H1296V65H1299V63H1302V59H1305V69H1308V66H1311V70H1314V70H1317V62H1320V64H1323V60H1326V64H1329V68H1332V68H1335V67H1338V63H1341V67H1344V64H1347V68H1350V63H1353V66H1356V69H1359V70H1362V68H1365V68H1368V70H1371V67H1374V65H1377V68H1380V66H1383V68H1386V69H1389V65H1392V64H1395V70H1398V70H1401V61H1404V68H1407V67H1410V64H1413V67H1416V65H1419V66H1422V70H1425V66H1428V66H1431V64H1434V68H1437V65H1440V66H1443V73H1446V66H1449V69H1452V63H1455V68H1458V63H1461V68H1464V70H1467V67H1470V65H1473V68H1476V63H1479V66H1482V64H1485V73H1488V69H1491V66H1494V63H1497V66H1500V66H1503V64H1506V63H1509V65H1512V70H1515V69H1518V69H1521V62H1524V65H1527V67H1530V63H1533V69H1536V65H1539V68H1542V62H1545V66H1548V64H1551V68H1554V62H1557V59H1560V63H1563V66H1566V64H1569V63H1572V65H1575V63H1578V72H1581V67H1584V61H1587V69H1590V62H1593V67H1596V68H1599V64H1602V64H1605V65H1608V66H1611V66H1614V65H1617V63H1620V68H1623V70H1626V64H1629V63H1632V71H1635V68H1638V74H1641V70H1644V66H1647V69H1650V65H1653V64H1656V68H1659V70H1662V62H1665V64H1668V65H1671V65H1674V66H1677V63H1680V66H1683V65H1685V178Z" fill="none" stroke="#1a7aac" stroke-width="1" transform="translate(0.5,0.5)"/><path d="M17.5,0V178M37.5,0V178M57.5,0V178M77.5,0V178M97.5,0V178M117.5,0V178M137.5,0V178M157.5,0V178M177.5,0V178M197.5,0V178M217.5,0V178M237.5,0V178M257.5,0V178M277.5,0V178M297.5,0V178M317.5,0V178M337.5,0V178M357.5,0V178M377.5,0V178M397.5,0V178M417.5,0V178M437.5,0V178M457.5,0V178M477.5,0V178M497.5,0V178M517.5,0V178M537.5,0V178M557.5,0V178M577.5,0V178M597.5,0V178M617.5,0V178M637.5,0V178M657.5,0V178M677.5,0V178M697.5,0V178M717.5,0V178M737.5,0V178M757.5,0V178M777.5,0V178M797.5,0V178M817.5,0V178M837.5,0V178M857.5,0V178M877.5,0V178M897.5,0V178M917.5,0V178M937.5,0V178M957.5,0V178M977.5,0V178M997.5,0V178M1017.5,0V178M1037.5,0V178M1057.5,0V178M1077.5,0V178M1097.5,0V178M1117.5,0V178M1137.5,0V178M1157.5,0V178M1177.5,0V178M1197.5,0V178M1217.5,0V178M1237.5,0V178M1257.5,0V178M1277.5,0V178M1297.5,0V178M1317.5,0V178M1337.5,0V178M1357.5,0V178M1377.5,0V178M1397.5,0V178M1417.5,0V178M1437.5,0V178M1457.5,0V178M1477.5,0V178M1497.5,0V178M1517.5,0V178M1537.5,0V178M1557.5,0V178M1577.5,0V178M1597.5,0V178M1617.5,0V178M1637.5,0V178M1657.5,0V178M1677.5,0V178M0,177.5H1685M0,157.5H1685M0,137.5H1685M0,117.5H1685M0,97.5H1685M0,77.5H1685M0,57.5H1685M0,37.5H1685M0,17.5H1685" stroke="#a8c2ec" stroke-width="1" fill="none"/></svg></div><div class="vbox vmax">3000.0</div><div class="sw" style="left:1698px;background:#1a78a8"></div><div class="sw" style="left:1726px;background:#e0f6fc"></div><div class="sw" style="left:1754px;background:#a8c2ec"></div><div class="vbox vcur">1,972.0 MHz</div><div class="btn" style="top:131px">Auto Fit</div><div class="btn" style="top:160px">Reset</div><div class="vbox vmin">0.0</div></div><div class="gw inact" style="top:913px"><div class="gicon"><svg width="20" height="20" viewBox="0 0 20 20"><defs><clipPath id="ic"><rect x="0" y="0" width="20" height="20" rx="3.5"/></clipPath></defs><g clip-path="url(#ic)"><rect width="20" height="11.5" fill="#0a7ab0"/><rect y="11.5" width="20" height="8.5" fill="#17172a"/><rect x="4" y="1.8" width="2.6" height="9" fill="#fff"/><rect x="9.5" y="4.2" width="2" height="6.6" fill="#fff"/><path d="M13.2,10.8 L14.8,6.8 L16.4,10.8Z" fill="#fff"/><rect x="4" y="12.3" width="2.6" height="6.2" rx="1" fill="#fff"/><rect x="8.6" y="12.3" width="2.6" height="6.2" rx="1" fill="#fff"/><rect x="13.2" y="12.3" width="2.6" height="6.2" rx="1" fill="#fff"/></g></svg></div><div class="gtitle">GPU Temperature</div><svg class="gclose" width="14" height="14" viewBox="0 0 14 14"><path d="M1,1L13,13M13,1L1,13" stroke="#8a8a8a" stroke-width="1.2"/></svg><div class="garea"><svg class="gsvg" width="1685" height="178" viewBox="0 0 1685 178"><defs><linearGradient id="g4" x1="0" y1="0" x2="0" y2="178" gradientUnits="userSpaceOnUse"><stop offset="0.0000" stop-color="#6a6890"/><stop offset="0.3876" stop-color="#6a6890"/><stop offset="0.5000" stop-color="#5a5c80"/><stop offset="0.6124" stop-color="#4a5270"/><stop offset="0.7247" stop-color="#364860"/><stop offset="0.8371" stop-color="#263650"/><stop offset="1.0000" stop-color="#1c1e34"/></linearGradient><linearGradient id="bg4" x1="0" y1="0" x2="0" y2="1"><stop offset="0" stop-color="#d4e8f8"/><stop offset="0.14" stop-color="#dceffb"/><stop offset="0.2" stop-color="#e0f6fc"/></linearGradient></defs><rect width="1685" height="178" fill="url(#bg4)"/><path d="M0,178V26H3V26H6V25H9V26H12V25H15V24H18V26H21V24H24V25H27V25H30V25H33V26H36V26H39V25H42V23H45V25H48V25H51V25H54V25H57V26H60V26H63V23H66V25H69V26H72V26H75V26H78V25H81V25H84V25H87V25H90V22H93V22H96V25H99V26H102V25H105V25H108V26H111V24H114V26H117V26H120V25H123V25H126V25H129V26H132V24H135V26H138V26H141V26H144V25H147V26H150V26H153V26H156V25H159V26H162V26H165V26H168V26H171V26H174V26H177V26H180V26H183V25H186V26H189V25H192V25H195V25H198V23H201V23H204V26H207V24H210V23H213V25H216V26H219V26H222V26H225V25H228V26H231V25H234V25H237V25H240V25H243V25H246V26H249V25H252V25H255V25H258V25H261V25H264V25H267V26H270V25H273V25H276V26H279V25H282V26H285V26H288V26H291V25H294V26H297V26H300V26H303V26H306V26H309V23H312V25H315V24H318V25H321V26H324V25H327V23H330V26H333V26H336V26H339V25H342V26H345V25H348V22H351V24H354V26H357V23H360V26H363V26H366V26H369V24H372V26H375V23H378V25H381V26H384V24H387V25H390V22H393V24H396V25H399V25H402V26H405V25H408V26H411V24H414V25H417V24H420V26H423V25H426V25H429V25H432V25H435V23H438V26H441V25H444V26H447V26H450V25H453V25H456V25H459V26H462V25H465V26H468V22H471V25H474V26H477V25H480V25H483V24H486V24H489V25H492V24H495V26H498V26H501V26H504V25H507V26H510V26H513V23H516V24H519V25H522V23H525V25H528V25H531V26H534V26H537V25H540V26H543V25H546V23H549V26H552V26H555V23H558V26H561V25H564V25H567V24H570V26H573V24H576V25H579V26H582V26H585V26H588V24H591V26H594V25H597V25H600V25H603V26H606V23H609V25H612V26H615V26H618V26H621V23H624V25H627V25H630V25H633V26H636V26H639V26H642V26H645V23H648V26H651V26H654V25H657V26H660V26H663V25H666V25H669V24H672V26H675V26H678V26H681V25H684V25H687V26H690V26H693V26H696V26H699V26H702V25H705V24H708V26H711V26H714V24H717V26H720V26H723V26H726V25H729V25H732V25H735V26H738V26H741V25H744V25H747V26H750V25H753V25H756V26H759V24H762V23H765V26H768V25H771V26H774V25H777V25H780V24H783V25H786V25H789V25H792V26H795V25H798V24H801V25H804V25H807V24H810V25H813V26H816V25H819V26H822V25H825V24H828V26H831V25H834V25H837V25H840V25H843V22H846V24H849V25H852V25H855V26H858V26H861V25H864V25H867V26H870V25H873V25H876V25H879V26H882V25H885V25H888V25H891V26H894V26H897V26H900V24H903V26H906V25H909V25H912V26H915V23H918V26H921V26H924V26H927V26H930V26H933V24H936V25H939V25H942V23H945V26H948V22H951V25H954V26H957V26H960V26H963V25H966V26H969V25H972V23H975V25H978V23H981V25H984V25H987V26H990V26H993V26H996V25H999V25H1002V24H1005V25H1008V23H1011V26H1014V25H1017V25H1020V25H1023V26H1026V24H1029V25H1032V25H1035V26H1038V24H1041V26H1044V25H1047V25H1050V26H1053V26H1056V24H1059V25H1062V26H1065V26H1068V26H1071V25H1074V25H1077V23H1080V26H1083V25H1086V23H1089V26H1092V26H1095V26H1098V24H1101V24H1104V23H1107V26H1110V26H1113V26H1116V26H1119V23H1122V24H1125V25H1128V26H1131V26H1134V25H1137V26H1140V26H1143V26H1146V26H1149V25H1152V24H1155V25H1158V26H1161V25H1164V26H1167V26H1170V25H1173V23H1176V24H1179V25H1182V25H1185V26H1188V25H1191V25H1194V26H1197V26H1200V26H1203V26H1206V25H1209V25H1212V25H1215V23H1218V25H1221V25H1224V25H1227V26H1230V25H1233V25H1236V25H1239V26H1242V25H1245V26H1248V24H1251V26H1254V26H1257V26H1260V24H1263V26H1266V25H1269V25H1272V23H1275V23H1278V23H1281V25H1284V26H1287V26H1290V25H1293V25H1296V26H1299V26H1302V25H1305V25H1308V25H1311V25H1314V25H1317V22H1320V22H1323V24H1326V25H1329V26H1332V26H1335V25H1338V26H1341V26H1344V26H1347V26H1350V25H1353V26H1356V26H1359V25H1362V26H1365V25H1368V26H1371V25H1374V24H1377V24H1380V26H1383V23H1386V25H1389V25H1392V26H1395V25H1398V25H1401V24H1404V26H1407V26H1410V26H1413V25H1416V25H1419V26H1422V26H1425V25H1428V26H1431V23H1434V25H1437V25H1440V25H1443V24H1446V26H1449V26H1452V25H1455V25H1458V25H1461V25H1464V26H1467V25H1470V25H1473V22H1476V25H1479V25H1482V25H1485V24H1488V26H1491V25H1494V26H1497V26H1500V24H1503V25H1506V26H1509V26H1512V26H1515V23H1518V25H1521V26H1524V25H1527V25H1530V25H1533V26H1536V25H1539V26H1542V24H1545V26H1548V26H1551V26H1554V26H1557V26H1560V26H1563V25H1566V25H1569V25H1572V26H1575V25H1578V23H1581V26H1584V25H1587V25H1590V25H1593V25H1596V26H1599V25H1602V25H1605V26H1608V25H1611V26H1614V26H1617V25H1620V25H1623V25H1626V25H1629V25H1632V26H1635V26H1638V23H1641V26H1644V25H1647V26H1650V25H1653V25H1656V26H1659V25H1662V26H1665V25H1668V25H1671V25H1674V26H1677V26H1680V25H1683V26H1685V178Z" fill="url(#g4)"/><path d="M0,178V26H3V26H6V25H9V26H12V25H15V24H18V26H21V24H24V25H27V25H30V25H33V26H36V26H39V25H42V23H45V25H48V25H51V25H54V25H57V26H60V26H63V23H66V25H69V26H72V26H75V26H78V25H81V25H84V25H87V25H90V22H93V22H96V25H99V26H102V25H105V25H108V26H111V24H114V26H117V26H120V25H123V25H126V25H129V26H132V24H135V26H138V26H141V26H144V25H147V26H150V26H153V26H156V25H159V26H162V26H165V26H168V26H171V26H174V26H177V26H180V26H183V25H186V26H189V25H192V25H195V25H198V23H201V23H204V26H207V24H210V23H213V25H216V26H219V26H222V26H225V25H228V26H231V25H234V25H237V25H240V25H243V25H246V26H249V25H252V25H255V25H258V25H261V25H264V25H267V26H270V25H273V25H276V26H279V25H282V26H285V26H288V26H291V25H294V26H297V26H300V26H303V26H306V26H309V23H312V25H315V24H318V25H321V26H324V25H327V23H330V26H333V26H336V26H339V25H342V26H345V25H348V22H351V24H354V26H357V23H360V26H363V26H366V26H369V24H372V26H375V23H378V25H381V26H384V24H387V25H390V22H393V24H396V25H399V25H402V26H405V25H408V26H411V24H414V25H417V24H420V26H423V25H426V25H429V25H432V25H435V23H438V26H441V25H444V26H447V26H450V25H453V25H456V25H459V26H462V25H465V26H468V22H471V25H474V26H477V25H480V25H483V24H486V24H489V25H492V24H495V26H498V26H501V26H504V25H507V26H510V26H513V23H516V24H519V25H522V23H525V25H528V25H531V26H534V26H537V25H540V26H543V25H546V23H549V26H552V26H555V23H558V26H561V25H564V25H567V24H570V26H573V24H576V25H579V26H582V26H585V26H588V24H591V26H594V25H597V25H600V25H603V26H606V23H609V25H612V26H615V26H618V26H621V23H624V25H627V25H630V25H633V26H636V26H639V26H642V26H645V23H648V26H651V26H654V25H657V26H660V26H663V25H666V25H669V24H672V26H675V26H678V26H681V25H684V25H687V26H690V26H693V26H696V26H699V26H702V25H705V24H708V26H711V26H714V24H717V26H720V26H723V26H726V25H729V25H732V25H735V26H738V26H741V25H744V25H747V26H750V25H753V25H756V26H759V24H762V23H765V26H768V25H771V26H774V25H777V25H780V24H783V25H786V25H789V25H792V26H795V25H798V24H801V25H804V25H807V24H810V25H813V26H816V25H819V26H822V25H825V24H828V26H831V25H834V25H837V25H840V25H843V22H846V24H849V25H852V25H855V26H858V26H861V25H864V25H867V26H870V25H873V25H876V25H879V26H882V25H885V25H888V25H891V26H894V26H897V26H900V24H903V26H906V25H909V25H912V26H915V23H918V26H921V26H924V26H927V26H930V26H933V24H936V25H939V25H942V23H945V26H948V22H951V25H954V26H957V26H960V26H963V25H966V26H969V25H972V23H975V25H978V23H981V25H984V25H987V26H990V26H993V26H996V25H999V25H1002V24H1005V25H1008V23H1011V26H1014V25H1017V25H1020V25H1023V26H1026V24H1029V25H1032V25H1035V26H1038V24H1041V26H1044V25H1047V25H1050V26H1053V26H1056V24H1059V25H1062V26H1065V26H1068V26H1071V25H1074V25H1077V23H1080V26H1083V25H1086V23H1089V26H1092V26H1095V26H1098V24H1101V24H1104V23H1107V26H1110V26H1113V26H1116V26H1119V23H1122V24H1125V25H1128V26H1131V26H1134V25H1137V26H1140V26H1143V26H1146V26H1149V25H1152V24H1155V25H1158V26H1161V25H1164V26H1167V26H1170V25H1173V23H1176V24H1179V25H1182V25H1185V26H1188V25H1191V25H1194V26H1197V26H1200V26H1203V26H1206V25H1209V25H1212V25H1215V23H1218V25H1221V25H1224V25H1227V26H1230V25H1233V25H1236V25H1239V26H1242V25H1245V26H1248V24H1251V26H1254V26H1257V26H1260V24H1263V26H1266V25H1269V25H1272V23H1275V23H1278V23H1281V25H1284V26H1287V26H1290V25H1293V25H1296V26H1299V26H1302V25H1305V25H1308V25H1311V25H1314V25H1317V22H1320V22H1323V24H1326V25H1329V26H1332V26H1335V25H1338V26H1341V26H1344V26H1347V26H1350V25H1353V26H1356V26H1359V25H1362V26H1365V25H1368V26H1371V25H1374V24H1377V24H1380V26H1383V23H1386V25H1389V25H1392V26H1395V25H1398V25H1401V24H1404V26H1407V26H1410V26H1413V25H1416V25H1419V26H1422V26H1425V25H1428V26H1431V23H1434V25H1437V25H1440V25H1443V24H1446V26H1449V26H1452V25H1455V25H1458V25H1461V25H1464V26H1467V25H1470V25H1473V22H1476V25H1479V25H1482V25H1485V24H1488V26H1491V25H1494V26H1497V26H1500V24H1503V25H1506V26H1509V26H1512V26H1515V23H1518V25H1521V26H1524V25H1527V25H1530V25H1533V26H1536V25H1539V26H1542V24H1545V26H1548V26H1551V26H1554V26H1557V26H1560V26H1563V25H1566V25H1569V25H1572V26H1575V25H1578V23H1581V26H1584V25H1587V25H1590V25H1593V25H1596V26H1599V25H1602V25H1605V26H1608V25H1611V26H1614V26H1617V25H1620V25H1623V25H1626V25H1629V25H1632V26H1635V26H1638V23H1641V26H1644V25H1647V26H1650V25H1653V25H1656V26H1659V25H1662V26H1665V25H1668V25H1671V25H1674V26H1677V26H1680V25H1683V26H1685V178Z" fill="none" stroke="#5a78b0" stroke-width="1" transform="translate(0.5,0.5)"/><path d="M17.5,0V178M37.5,0V178M57.5,0V178M77.5,0V178M97.5,0V178M117.5,0V178M137.5,0V178M157.5,0V178M177.5,0V178M197.5,0V178M217.5,0V178M237.5,0V178M257.5,0V178M277.5,0V178M297.5,0V178M317.5,0V178M337.5,0V178M357.5,0V178M377.5,0V178M397.5,0V178M417.5,0V178M437.5,0V178M457.5,0V178M477.5,0V178M497.5,0V178M517.5,0V178M537.5,0V178M557.5,0V178M577.5,0V178M597.5,0V178M617.5,0V178M637.5,0V178M657.5,0V178M677.5,0V178M697.5,0V178M717.5,0V178M737.5,0V178M757.5,0V178M777.5,0V178M797.5,0V178M817.5,0V178M837.5,0V178M857.5,0V178M877.5,0V178M897.5,0V178M917.5,0V178M937.5,0V178M957.5,0V178M977.5,0V178M997.5,0V178M1017.5,0V178M1037.5,0V178M1057.5,0V178M1077.5,0V178M1097.5,0V178M1117.5,0V178M1137.5,0V178M1157.5,0V178M1177.5,0V178M1197.5,0V178M1217.5,0V178M1237.5,0V178M1257.5,0V178M1277.5,0V178M1297.5,0V178M1317.5,0V178M1337.5,0V178M1357.5,0V178M1377.5,0V178M1397.5,0V178M1417.5,0V178M1437.5,0V178M1457.5,0V178M1477.5,0V178M1497.5,0V178M1517.5,0V178M1537.5,0V178M1557.5,0V178M1577.5,0V178M1597.5,0V178M1617.5,0V178M1637.5,0V178M1657.5,0V178M1677.5,0V178M0,177.5H1685M0,157.5H1685M0,137.5H1685M0,117.5H1685M0,97.5H1685M0,77.5H1685M0,57.5H1685M0,37.5H1685M0,17.5H1685" stroke="#a8c2ec" stroke-width="1" fill="none"/></svg></div><div class="vbox vmax">100.0</div><div class="sw" style="left:1698px;background:#4a6a9a"></div><div class="sw" style="left:1726px;background:#e0f6fc"></div><div class="sw" style="left:1754px;background:#a8c2ec"></div><div class="vbox vcur">85.5 °C</div><div class="btn" style="top:131px">Auto Fit</div><div class="btn" style="top:160px">Reset</div><div class="vbox vmin">0.0</div></div><div class="gw" style="top:1141px"><div class="gicon"><svg width="20" height="20" viewBox="0 0 20 20"><defs><clipPath id="ic"><rect x="0" y="0" width="20" height="20" rx="3.5"/></clipPath></defs><g clip-path="url(#ic)"><rect width="20" height="11.5" fill="#0a7ab0"/><rect y="11.5" width="20" height="8.5" fill="#17172a"/><rect x="4" y="1.8" width="2.6" height="9" fill="#fff"/><rect x="9.5" y="4.2" width="2" height="6.6" fill="#fff"/><path d="M13.2,10.8 L14.8,6.8 L16.4,10.8Z" fill="#fff"/><rect x="4" y="12.3" width="2.6" height="6.2" rx="1" fill="#fff"/><rect x="8.6" y="12.3" width="2.6" height="6.2" rx="1" fill="#fff"/><rect x="13.2" y="12.3" width="2.6" height="6.2" rx="1" fill="#fff"/></g></svg></div><div class="gtitle">GPU Power (Total)</div><svg class="gclose" width="14" height="14" viewBox="0 0 14 14"><path d="M1,1L13,13M13,1L1,13" stroke="#8a8a8a" stroke-width="1.2"/></svg><div class="garea"><svg class="gsvg" width="1685" height="178" viewBox="0 0 1685 178"><defs><linearGradient id="g5" x1="0" y1="0" x2="0" y2="178" gradientUnits="userSpaceOnUse"><stop offset="0.0000" stop-color="#1f5878"/><stop offset="0.3483" stop-color="#1e4d66"/><stop offset="0.6011" stop-color="#1e4d66"/><stop offset="0.7135" stop-color="#1e4460"/><stop offset="0.8258" stop-color="#1c3650"/><stop offset="0.8933" stop-color="#1c2a42"/><stop offset="0.9045" stop-color="#1c1e32"/><stop offset="1.0000" stop-color="#1c1a2e"/></linearGradient><linearGradient id="bg5" x1="0" y1="0" x2="0" y2="1"><stop offset="0" stop-color="#e0f6fc"/></linearGradient></defs><rect width="1685" height="178" fill="url(#bg5)"/><path d="M0,178V61H3V46H6V61H9V56H12V57H15V55H18V56H21V79H24V70H27V59H30V59H33V57H36V58H39V72H42V59H45V54H48V54H51V55H54V55H57V64H60V62H63V57H66V55H69V57H72V63H75V62H78V61H81V77H84V56H87V49H90V57H93V62H96V62H99V58H102V57H105V56H108V62H111V56H114V61H117V59H120V51H123V71H126V62H129V61H132V50H135V84H138V54H141V58H144V64H147V62H150V58H153V54H156V57H159V73H162V83H165V54H168V63H171V43H174V52H177V54H180V62H183V54H186V58H189V58H192V55H195V59H198V55H201V50H204V59H207V55H210V57H213V59H216V59H219V34H222V66H225V51H228V48H231V55H234V56H237V52H240V73H243V61H246V60H249V55H252V61H255V56H258V63H261V63H264V73H267V62H270V54H273V52H276V54H279V63H282V59H285V44H288V57H291V62H294V54H297V62H300V61H303V51H306V62H309V54H312V64H315V72H318V54H321V58H324V61H327V63H330V62H333V48H336V52H339V80H342V52H345V60H348V55H351V60H354V59H357V59H360V59H363V73H366V33H369V57H372V61H375V54H378V48H381V74H384V63H387V44H390V63H393V56H396V58H399V79H402V78H405V58H408V47H411V44H414V62H417V48H420V43H423V57H426V52H429V59H432V59H435V59H438V56H441V57H444V58H447V56H450V75H453V57H456V49H459V57H462V60H465V58H468V50H471V51H474V62H477V55H480V51H483V49H486V56H489V59H492V53H495V53H498V59H501V48H504V57H507V54H510V57H513V62H516V60H519V57H522V59H525V53H528V58H531V52H534V34H537V61H540V57H543V49H546V56H549V58H552V63H555V61H558V59H561V79H564V48H567V59H570V58H573V48H576V57H579V57H582V45H585V58H588V58H591V48H594V44H597V69H600V58H603V57H606V53H609V63H612V58H615V57H618V59H621V62H624V62H627V60H630V49H633V55H636V60H639V57H642V44H645V60H648V54H651V51H654V74H657V49H660V80H663V69H666V59H669V62H672V54H675V56H678V61H681V52H684V59H687V47H690V55H693V58H696V57H699V62H702V59H705V59H708V54H711V50H714V59H717V54H720V60H723V53H726V42H729V60H732V50H735V60H738V54H741V55H744V50H747V53H750V56H753V56H756V63H759V57H762V63H765V62H768V58H771V80H774V53H777V55H780V72H783V54H786V60H789V46H792V61H795V63H798V54H801V61H804V61H807V59H810V53H813V32H816V53H819V54H822V56H825V50H828V57H831V55H834V44H837V56H840V54H843V55H846V50H849V61H852V58H855V46H858V55H861V63H864V60H867V56H870V48H873V74H876V60H879V53H882V55H885V76H888V53H891V56H894V55H897V55H900V58H903V62H906V72H909V60H912V61H915V56H918V61H921V62H924V67H927V43H930V54H933V88H936V42H939V61H942V59H945V63H948V57H951V62H954V56H957V60H960V56H963V53H966V53H969V60H972V58H975V57H978V57H981V56H984V61H987V58H990V55H993V55H996V53H999V49H1002V61H1005V58H1008V62H1011V49H1014V57H1017V56H1020V54H1023V36H1026V61H1029V60H1032V58H1035V60H1038V59H1041V60H1044V62H1047V56H1050V61H1053V57H1056V54H1059V59H1062V60H1065V54H1068V61H1071V70H1074V47H1077V56H1080V49H1083V55H1086V67H1089V47H1092V53H1095V59H1098V47H1101V50H1104V36H1107V63H1110V62H1113V55H1116V60H1119V49H1122V52H1125V53H1128V54H1131V57H1134V56H1137V60H1140V62H1143V56H1146V56H1149V60H1152V61H1155V43H1158V53H1161V73H1164V59H1167V54H1170V56H1173V57H1176V52H1179V56H1182V54H1185V57H1188V55H1191V52H1194V60H1197V54H1200V40H1203V71H1206V57H1209V54H1212V62H1215V56H1218V56H1221V54H1224V55H1227V55H1230V57H1233V53H1236V54H1239V71H1242V59H1245V78H1248V49H1251V54H1254V60H1257V52H1260V104H1263V54H1266V58H1269V60H1272V53H1275V61H1278V63H1281V60H1284V55H1287V63H1290V54H1293V59H1296V55H1299V52H1302V55H1305V57H1308V61H1311V57H1314V104H1317V58H1320V56H1323V56H1326V53H1329V57H1332V53H1335V62H1338V57H1341V61H1344V62H1347V45H1350V53H1353V55H1356V51H1359V72H1362V55H1365V61H1368V54H1371V63H1374V58H1377V57H1380V63H1383V60H1386V59H1389V58H1392V58H1395V62H1398V56H1401V42H1404V53H1407V60H1410V67H1413V59H1416V63H1419V56H1422V47H1425V56H1428V56H1431V63H1434V59H1437V56H1440V56H1443V46H1446V68H1449V56H1452V56H1455V56H1458V55H1461V62H1464V62H1467V57H1470V62H1473V55H1476V47H1479V56H1482V62H1485V54H1488V44H1491V54H1494V59H1497V58H1500V63H1503V58H1506V54H1509V53H1512V54H1515V56H1518V59H1521V61H1524V63H1527V54H1530V62H1533V96H1536V63H1539V57H1542V59H1545V53H1548V54H1551V59H1554V56H1557V59H1560V57H1563V53H1566V60H1569V57H1572V50H1575V64H1578V56H1581V59H1584V59H1587V51H1590V47H1593V54H1596V62H1599V74H1602V60H1605V59H1608V59H1611V78H1614V53H1617V62H1620V56H1623V61H1626V57H1629V55H1632V62H1635V55H1638V55H1641V60H1644V57H1647V54H1650V66H1653V58H1656V46H1659V63H1662V54H1665V57H1668V67H1671V55H1674V59H1677V55H1680V62H1683V61H1685V178Z" fill="url(#g5)"/><path d="M0,178V61H3V46H6V61H9V56H12V57H15V55H18V56H21V79H24V70H27V59H30V59H33V57H36V58H39V72H42V59H45V54H48V54H51V55H54V55H57V64H60V62H63V57H66V55H69V57H72V63H75V62H78V61H81V77H84V56H87V49H90V57H93V62H96V62H99V58H102V57H105V56H108V62H111V56H114V61H117V59H120V51H123V71H126V62H129V61H132V50H135V84H138V54H141V58H144V64H147V62H150V58H153V54H156V57H159V73H162V83H165V54H168V63H171V43H174V52H177V54H180V62H183V54H186V58H189V58H192V55H195V59H198V55H201V50H204V59H207V55H210V57H213V59H216V59H219V34H222V66H225V51H228V48H231V55H234V56H237V52H240V73H243V61H246V60H249V55H252V61H255V56H258V63H261V63H264V73H267V62H270V54H273V52H276V54H279V63H282V59H285V44H288V57H291V62H294V54H297V62H300V61H303V51H306V62H309V54H312V64H315V72H318V54H321V58H324V61H327V63H330V62H333V48H336V52H339V80H342V52H345V60H348V55H351V60H354V59H357V59H360V59H363V73H366V33H369V57H372V61H375V54H378V48H381V74H384V63H387V44H390V63H393V56H396V58H399V79H402V78H405V58H408V47H411V44H414V62H417V48H420V43H423V57H426V52H429V59H432V59H435V59H438V56H441V57H444V58H447V56H450V75H453V57H456V49H459V57H462V60H465V58H468V50H471V51H474V62H477V55H480V51H483V49H486V56H489V59H492V53H495V53H498V59H501V48H504V57H507V54H510V57H513V62H516V60H519V57H522V59H525V53H528V58H531V52H534V34H537V61H540V57H543V49H546V56H549V58H552V63H555V61H558V59H561V79H564V48H567V59H570V58H573V48H576V57H579V57H582V45H585V58H588V58H591V48H594V44H597V69H600V58H603V57H606V53H609V63H612V58H615V57H618V59H621V62H624V62H627V60H630V49H633V55H636V60H639V57H642V44H645V60H648V54H651V51H654V74H657V49H660V80H663V69H666V59H669V62H672V54H675V56H678V61H681V52H684V59H687V47H690V55H693V58H696V57H699V62H702V59H705V59H708V54H711V50H714V59H717V54H720V60H723V53H726V42H729V60H732V50H735V60H738V54H741V55H744V50H747V53H750V56H753V56H756V63H759V57H762V63H765V62H768V58H771V80H774V53H777V55H780V72H783V54H786V60H789V46H792V61H795V63H798V54H801V61H804V61H807V59H810V53H813V32H816V53H819V54H822V56H825V50H828V57H831V55H834V44H837V56H840V54H843V55H846V50H849V61H852V58H855V46H858V55H861V63H864V60H867V56H870V48H873V74H876V60H879V53H882V55H885V76H888V53H891V56H894V55H897V55H900V58H903V62H906V72H909V60H912V61H915V56H918V61H921V62H924V67H927V43H930V54H933V88H936V42H939V61H942V59H945V63H948V57H951V62H954V56H957V60H960V56H963V53H966V53H969V60H972V58H975V57H978V57H981V56H984V61H987V58H990V55H993V55H996V53H999V49H1002V61H1005V58H1008V62H1011V49H1014V57H1017V56H1020V54H1023V36H1026V61H1029V60H1032V58H1035V60H1038V59H1041V60H1044V62H1047V56H1050V61H1053V57H1056V54H1059V59H1062V60H1065V54H1068V61H1071V70H1074V47H1077V56H1080V49H1083V55H1086V67H1089V47H1092V53H1095V59H1098V47H1101V50H1104V36H1107V63H1110V62H1113V55H1116V60H1119V49H1122V52H1125V53H1128V54H1131V57H1134V56H1137V60H1140V62H1143V56H1146V56H1149V60H1152V61H1155V43H1158V53H1161V73H1164V59H1167V54H1170V56H1173V57H1176V52H1179V56H1182V54H1185V57H1188V55H1191V52H1194V60H1197V54H1200V40H1203V71H1206V57H1209V54H1212V62H1215V56H1218V56H1221V54H1224V55H1227V55H1230V57H1233V53H1236V54H1239V71H1242V59H1245V78H1248V49H1251V54H1254V60H1257V52H1260V104H1263V54H1266V58H1269V60H1272V53H1275V61H1278V63H1281V60H1284V55H1287V63H1290V54H1293V59H1296V55H1299V52H1302V55H1305V57H1308V61H1311V57H1314V104H1317V58H1320V56H1323V56H1326V53H1329V57H1332V53H1335V62H1338V57H1341V61H1344V62H1347V45H1350V53H1353V55H1356V51H1359V72H1362V55H1365V61H1368V54H1371V63H1374V58H1377V57H1380V63H1383V60H1386V59H1389V58H1392V58H1395V62H1398V56H1401V42H1404V53H1407V60H1410V67H1413V59H1416V63H1419V56H1422V47H1425V56H1428V56H1431V63H1434V59H1437V56H1440V56H1443V46H1446V68H1449V56H1452V56H1455V56H1458V55H1461V62H1464V62H1467V57H1470V62H1473V55H1476V47H1479V56H1482V62H1485V54H1488V44H1491V54H1494V59H1497V58H1500V63H1503V58H1506V54H1509V53H1512V54H1515V56H1518V59H1521V61H1524V63H1527V54H1530V62H1533V96H1536V63H1539V57H1542V59H1545V53H1548V54H1551V59H1554V56H1557V59H1560V57H1563V53H1566V60H1569V57H1572V50H1575V64H1578V56H1581V59H1584V59H1587V51H1590V47H1593V54H1596V62H1599V74H1602V60H1605V59H1608V59H1611V78H1614V53H1617V62H1620V56H1623V61H1626V57H1629V55H1632V62H1635V55H1638V55H1641V60H1644V57H1647V54H1650V66H1653V58H1656V46H1659V63H1662V54H1665V57H1668V67H1671V55H1674V59H1677V55H1680V62H1683V61H1685V178Z" fill="none" stroke="#1a7aac" stroke-width="1" transform="translate(0.5,0.5)"/><path d="M17.5,0V178M37.5,0V178M57.5,0V178M77.5,0V178M97.5,0V178M117.5,0V178M137.5,0V178M157.5,0V178M177.5,0V178M197.5,0V178M217.5,0V178M237.5,0V178M257.5,0V178M277.5,0V178M297.5,0V178M317.5,0V178M337.5,0V178M357.5,0V178M377.5,0V178M397.5,0V178M417.5,0V178M437.5,0V178M457.5,0V178M477.5,0V178M497.5,0V178M517.5,0V178M537.5,0V178M557.5,0V178M577.5,0V178M597.5,0V178M617.5,0V178M637.5,0V178M657.5,0V178M677.5,0V178M697.5,0V178M717.5,0V178M737.5,0V178M757.5,0V178M777.5,0V178M797.5,0V178M817.5,0V178M837.5,0V178M857.5,0V178M877.5,0V178M897.5,0V178M917.5,0V178M937.5,0V178M957.5,0V178M977.5,0V178M997.5,0V178M1017.5,0V178M1037.5,0V178M1057.5,0V178M1077.5,0V178M1097.5,0V178M1117.5,0V178M1137.5,0V178M1157.5,0V178M1177.5,0V178M1197.5,0V178M1217.5,0V178M1237.5,0V178M1257.5,0V178M1277.5,0V178M1297.5,0V178M1317.5,0V178M1337.5,0V178M1357.5,0V178M1377.5,0V178M1397.5,0V178M1417.5,0V178M1437.5,0V178M1457.5,0V178M1477.5,0V178M1497.5,0V178M1517.5,0V178M1537.5,0V178M1557.5,0V178M1577.5,0V178M1597.5,0V178M1617.5,0V178M1637.5,0V178M1657.5,0V178M1677.5,0V178M0,177.5H1685M0,157.5H1685M0,137.5H1685M0,117.5H1685M0,97.5H1685M0,77.5H1685M0,57.5H1685M0,37.5H1685M0,17.5H1685" stroke="#a8c2ec" stroke-width="1" fill="none"/></svg></div><div class="vbox vmax">200.000</div><div class="sw" style="left:1698px;background:#1a6a9a"></div><div class="sw" style="left:1726px;background:#e0f6fc"></div><div class="sw" style="left:1754px;background:#a8c2ec"></div><div class="vbox vcur">131.529 W</div><div class="btn" style="top:131px">Auto Fit</div><div class="btn" style="top:160px">Reset</div><div class="vbox vmin">0.000</div></div><div class="hw"><div class="hwtitle"></div><div style="position:absolute;left:9px;top:8px"><svg width="20" height="20" viewBox="0 0 20 20"><defs><clipPath id="ic2"><rect x="0" y="0" width="20" height="20" rx="3.5"/></clipPath></defs><g clip-path="url(#ic2)"><rect width="20" height="11.5" fill="#0a7ab0"/><rect y="11.5" width="20" height="8.5" fill="#17172a"/><rect x="4" y="1.8" width="2.6" height="9" fill="#fff"/><rect x="9.5" y="4.2" width="2" height="6.6" fill="#fff"/><path d="M13.2,10.8 L14.8,6.8 L16.4,10.8Z" fill="#fff"/><rect x="4" y="12.3" width="2.6" height="6.2" rx="1" fill="#fff"/><rect x="8.6" y="12.3" width="2.6" height="6.2" rx="1" fill="#fff"/><rect x="13.2" y="12.3" width="2.6" height="6.2" rx="1" fill="#fff"/></g></svg></div><div class="hwtt" style="left:35px">HWiNFO® 32 v8.30-5800 Sensor Status [442 values hidden]</div><div style="position:absolute;left:587px;top:17px;width:12px;height:1px;background:#1a1a2a"></div><div style="position:absolute;left:645px;top:12px;width:12px;height:12px;border:1.2px solid #1a1a2a;border-radius:2px"></div><svg style="position:absolute;left:703px;top:12px" width="13" height="13" viewBox="0 0 13 13"><path d="M0.6,0.6L12.4,12.4M12.4,0.6L0.6,12.4" stroke="#1a1a2a" stroke-width="1.2"/></svg><div style="position:absolute;left:719px;top:38px;width:1px;height:1360px;background:#ebebeb"></div><div class="hdr" style="left:8px">Sensor</div><div class="hsep" style="left:305px"></div><div class="hdr hv" style="left:305px">Current</div><div class="hsep" style="left:405px"></div><div class="hdr hv" style="left:405px">Minimum</div><div class="hsep" style="left:505px"></div><div class="hdr hv" style="left:505px">Maximum</div><div class="hsep" style="left:605px"></div><div class="hdr hv" style="left:605px">Average</div><div class="hsep" style="left:705px"></div><div class="rg" style="top:63px"></div><div class="ic" style="left:8px;top:69px"><svg width="18" height="10" viewBox="0 0 18 10"><path d="M1,1 L9,8.6 L17,1" fill="none" stroke="#3c3c4a" stroke-width="1.2"/></svg></div><div class="ic" style="left:31px;top:65px"><svg width="16" height="18" viewBox="0 0 16 18"><rect x="3" y="0.5" width="10" height="17" fill="#4c4a5c"/><g fill="#b0b0b8"><rect x="0.8" y="2" width="1.6" height="1.6"/><rect x="0.8" y="6" width="1.6" height="1.6"/><rect x="0.8" y="10" width="1.6" height="1.6"/><rect x="0.8" y="14" width="1.6" height="1.6"/><rect x="13.6" y="2" width="1.6" height="1.6"/><rect x="13.6" y="6" width="1.6" height="1.6"/><rect x="13.6" y="10" width="1.6" height="1.6"/><rect x="13.6" y="14" width="1.6" height="1.6"/></g></svg></div><div class="gt sel" style="left:50px;top:65px">CPU [#0]: Intel Core Ultra 9 275HX</div><div class="rb" style="top:84px;left:69px;width:637px"></div><div class="rs" style="top:104px;left:49px;width:656px"></div><div class="ic" style="left:32px;top:84px"><svg width="10" height="18" viewBox="0 0 10 18"><path d="M0.6,2.4 L7.8,10 L0.6,17.6" fill="none" stroke="#404050" stroke-width="1.1"/></svg></div><div class="ic" style="left:52px;top:84px"><svg width="14" height="20" viewBox="0 0 14 20"><path d="M7.6,0 L12.2,0 L8.9,7.3 L12.2,7.3 L1.3,19.8 L5.0,10.1 L1.7,10.1 Z" fill="#eba545"/></svg></div><div class="tx" style="left:71px;top:84px">Core Voltages</div><div class="vv" style="left:305px;top:84px">0.754 V</div><div class="vv" style="left:405px;top:84px">0.598 V</div><div class="vv" style="left:505px;top:84px">1.211 V</div><div class="vv" style="left:605px;top:84px">0.755 V</div><div class="rs" style="top:125px;left:29px;width:676px"></div><div class="ic" style="left:32px;top:105px"><svg width="14" height="20" viewBox="0 0 14 20"><path d="M7.6,0 L12.2,0 L8.9,7.3 L12.2,7.3 L1.3,19.8 L5.0,10.1 L1.7,10.1 Z" fill="#eba545"/></svg></div><div class="tx" style="left:51px;top:105px">Uncore VID</div><div class="vv" style="left:305px;top:105px">0.931 V</div><div class="vv" style="left:405px;top:105px">0.733 V</div><div class="vv" style="left:505px;top:105px">1.006 V</div><div class="vv" style="left:605px;top:105px">0.916 V</div><div class="rb" style="top:126px;left:69px;width:637px"></div><div class="rs" style="top:146px;left:49px;width:656px"></div><div class="hl" style="top:126px"></div><div class="ic" style="left:32px;top:126px"><svg width="10" height="18" viewBox="0 0 10 18"><path d="M0.6,2.4 L7.8,10 L0.6,17.6" fill="none" stroke="#404050" stroke-width="1.1"/></svg></div><div class="ic" style="left:52px;top:126px"><svg width="16" height="20" viewBox="0 0 16 20"><path d="M10.69,5.35 A6.2,6.2 0 1 0 12.53,12.22" fill="none" stroke="#2c3548" stroke-width="1.3"/><path d="M10.6,4.0 L14.1,3.9 L13.7,7.4 Z" fill="#2c3548"/><path d="M7.3,6.1 V10.6 L9.7,13" fill="none" stroke="#3a4256" stroke-width="1.1"/></svg></div><div class="tx" style="left:71px;top:126px">Core Clocks</div><div class="vv" style="left:305px;top:126px">2,597.7 MHz</div><div class="vv" style="left:405px;top:126px">997.7 MHz</div><div class="vv" style="left:505px;top:126px">5,188.2 MHz</div><div class="vv" style="left:605px;top:126px">2,765.4 MHz</div><div class="rs" style="top:167px;left:29px;width:676px"></div><div class="ic" style="left:32px;top:147px"><svg width="16" height="20" viewBox="0 0 16 20"><path d="M10.69,5.35 A6.2,6.2 0 1 0 12.53,12.22" fill="none" stroke="#2c3548" stroke-width="1.3"/><path d="M10.6,4.0 L14.1,3.9 L13.7,7.4 Z" fill="#2c3548"/><path d="M7.3,6.1 V10.6 L9.7,13" fill="none" stroke="#3a4256" stroke-width="1.1"/></svg></div><div class="tx" style="left:51px;top:147px">Bus Clock</div><div class="vv" style="left:305px;top:147px">99.8 MHz</div><div class="vv" style="left:405px;top:147px">99.7 MHz</div><div class="vv" style="left:505px;top:147px">99.8 MHz</div><div class="vv" style="left:605px;top:147px">99.8 MHz</div><div class="rb" style="top:168px;left:49px;width:657px"></div><div class="rs" style="top:188px;left:29px;width:676px"></div><div class="hl" style="top:168px"></div><div class="ic" style="left:32px;top:168px"><svg width="16" height="20" viewBox="0 0 16 20"><path d="M10.69,5.35 A6.2,6.2 0 1 0 12.53,12.22" fill="none" stroke="#2c3548" stroke-width="1.3"/><path d="M10.6,4.0 L14.1,3.9 L13.7,7.4 Z" fill="#2c3548"/><path d="M7.3,6.1 V10.6 L9.7,13" fill="none" stroke="#3a4256" stroke-width="1.1"/></svg></div><div class="tx" style="left:51px;top:168px">Ring/LLC Clock</div><div class="vv" style="left:305px;top:168px">3,491.3 MHz</div><div class="vv" style="left:405px;top:168px">2,393.9 MHz</div><div class="vv" style="left:505px;top:168px">3,691.9 MHz</div><div class="vv" style="left:605px;top:168px">3,429.8 MHz</div><div class="rs" style="top:209px;left:29px;width:676px"></div><div class="ic" style="left:32px;top:189px"><svg width="16" height="20" viewBox="0 0 16 20"><path d="M10.69,5.35 A6.2,6.2 0 1 0 12.53,12.22" fill="none" stroke="#2c3548" stroke-width="1.3"/><path d="M10.6,4.0 L14.1,3.9 L13.7,7.4 Z" fill="#2c3548"/><path d="M7.3,6.1 V10.6 L9.7,13" fill="none" stroke="#3a4256" stroke-width="1.1"/></svg></div><div class="tx" style="left:51px;top:189px">D2D Clock</div><div class="vv" style="left:305px;top:189px">2,094.7 MHz</div><div class="vv" style="left:405px;top:189px">2,094.7 MHz</div><div class="vv" style="left:505px;top:189px">2,094.7 MHz</div><div class="vv" style="left:605px;top:189px">2,094.7 MHz</div><div class="rb" style="top:210px;left:69px;width:637px"></div><div class="rs" style="top:230px;left:49px;width:656px"></div><div class="hl" style="top:210px"></div><div class="ic" style="left:32px;top:210px"><svg width="10" height="18" viewBox="0 0 10 18"><path d="M0.6,2.4 L7.8,10 L0.6,17.6" fill="none" stroke="#404050" stroke-width="1.1"/></svg></div><div class="ic" style="left:52px;top:210px"><svg width="16" height="20" viewBox="0 0 16 20"><path d="M10.69,5.35 A6.2,6.2 0 1 0 12.53,12.22" fill="none" stroke="#2c3548" stroke-width="1.3"/><path d="M10.6,4.0 L14.1,3.9 L13.7,7.4 Z" fill="#2c3548"/><path d="M7.3,6.1 V10.6 L9.7,13" fill="none" stroke="#3a4256" stroke-width="1.1"/></svg></div><div class="tx" style="left:71px;top:210px">Core Effective Clocks</div><div class="vv" style="left:305px;top:210px">873.6 MHz</div><div class="vv" style="left:405px;top:210px">2.8 MHz</div><div class="vv" style="left:505px;top:210px">4,111.3 MHz</div><div class="vv" style="left:605px;top:210px">890.8 MHz</div><div class="rs" style="top:251px;left:29px;width:676px"></div><div class="hl" style="top:231px"></div><div class="ic" style="left:32px;top:231px"><svg width="16" height="20" viewBox="0 0 16 20"><path d="M10.69,5.35 A6.2,6.2 0 1 0 12.53,12.22" fill="none" stroke="#2c3548" stroke-width="1.3"/><path d="M10.6,4.0 L14.1,3.9 L13.7,7.4 Z" fill="#2c3548"/><path d="M7.3,6.1 V10.6 L9.7,13" fill="none" stroke="#3a4256" stroke-width="1.1"/></svg></div><div class="tx" style="left:51px;top:231px">Average Effective Clock</div><div class="vv" style="left:305px;top:231px">873.6 MHz</div><div class="vv" style="left:405px;top:231px">806.1 MHz</div><div class="vv" style="left:505px;top:231px">1,250.6 MHz</div><div class="vv" style="left:605px;top:231px">890.8 MHz</div><div class="rb" style="top:252px;left:69px;width:637px"></div><div class="rs" style="top:272px;left:49px;width:656px"></div><div class="hl" style="top:252px"></div><div class="ic" style="left:32px;top:252px"><svg width="10" height="18" viewBox="0 0 10 18"><path d="M0.6,2.4 L7.8,10 L0.6,17.6" fill="none" stroke="#404050" stroke-width="1.1"/></svg></div><div class="ic" style="left:52px;top:252px"><svg width="16" height="20" viewBox="0 0 16 20"><path d="M10.69,5.35 A6.2,6.2 0 1 0 12.53,12.22" fill="none" stroke="#2c3548" stroke-width="1.3"/><path d="M10.6,4.0 L14.1,3.9 L13.7,7.4 Z" fill="#2c3548"/><path d="M7.3,6.1 V10.6 L9.7,13" fill="none" stroke="#3a4256" stroke-width="1.1"/></svg></div><div class="tx" style="left:71px;top:252px">Core Usage</div><div class="vv" style="left:305px;top:252px">19.6 %</div><div class="vv" style="left:405px;top:252px">0.0 %</div><div class="vv" style="left:505px;top:252px">94.9 %</div><div class="vv" style="left:605px;top:252px">20.4 %</div><div class="rs" style="top:293px;left:29px;width:676px"></div><div class="hl" style="top:273px"></div><div class="ic" style="left:32px;top:273px"><svg width="16" height="20" viewBox="0 0 16 20"><path d="M10.69,5.35 A6.2,6.2 0 1 0 12.53,12.22" fill="none" stroke="#2c3548" stroke-width="1.3"/><path d="M10.6,4.0 L14.1,3.9 L13.7,7.4 Z" fill="#2c3548"/><path d="M7.3,6.1 V10.6 L9.7,13" fill="none" stroke="#3a4256" stroke-width="1.1"/></svg></div><div class="tx" style="left:51px;top:273px">Max CPU/Thread Usage</div><div class="vv" style="left:305px;top:273px">72.1 %</div><div class="vv" style="left:405px;top:273px">64.6 %</div><div class="vv" style="left:505px;top:273px">94.9 %</div><div class="vv" style="left:605px;top:273px">75.3 %</div><div class="rb" style="top:294px;left:49px;width:657px"></div><div class="rs" style="top:314px;left:29px;width:676px"></div><div class="hl" style="top:294px"></div><div class="ic" style="left:32px;top:294px"><svg width="16" height="20" viewBox="0 0 16 20"><path d="M10.69,5.35 A6.2,6.2 0 1 0 12.53,12.22" fill="none" stroke="#2c3548" stroke-width="1.3"/><path d="M10.6,4.0 L14.1,3.9 L13.7,7.4 Z" fill="#2c3548"/><path d="M7.3,6.1 V10.6 L9.7,13" fill="none" stroke="#3a4256" stroke-width="1.1"/></svg></div><div class="tx" style="left:51px;top:294px">Total CPU Usage</div><div class="vv" style="left:305px;top:294px">19.6 %</div><div class="vv" style="left:405px;top:294px">17.7 %</div><div class="vv" style="left:505px;top:294px">35.0 %</div><div class="vv" style="left:605px;top:294px">20.4 %</div><div class="rg" style="top:336px"></div><div class="ic" style="left:8px;top:342px"><svg width="18" height="10" viewBox="0 0 18 10"><path d="M1,1 L9,8.6 L17,1" fill="none" stroke="#3c3c4a" stroke-width="1.2"/></svg></div><div class="ic" style="left:31px;top:338px"><svg width="16" height="18" viewBox="0 0 16 18"><rect x="3" y="0.5" width="10" height="17" fill="#4c4a5c"/><g fill="#b0b0b8"><rect x="0.8" y="2" width="1.6" height="1.6"/><rect x="0.8" y="6" width="1.6" height="1.6"/><rect x="0.8" y="10" width="1.6" height="1.6"/><rect x="0.8" y="14" width="1.6" height="1.6"/><rect x="13.6" y="2" width="1.6" height="1.6"/><rect x="13.6" y="6" width="1.6" height="1.6"/><rect x="13.6" y="10" width="1.6" height="1.6"/><rect x="13.6" y="14" width="1.6" height="1.6"/></g></svg></div><div class="gt" style="left:50px;top:338px">CPU [#0]: Intel Core Ultra 9 275HX: Enhanced</div><div class="rs" style="top:377px;left:29px;width:676px"></div><div class="hl" style="top:357px"></div><div class="ic" style="left:35px;top:359px"><svg width="8" height="18" viewBox="0 0 8 18"><rect x="2.6" y="0.5" width="2.8" height="12" rx="1.4" fill="#dcdcdc"/><rect x="3.2" y="5" width="1.6" height="9" fill="#8c0a0a"/><circle cx="4" cy="14.6" r="2.5" fill="#7a0000"/></svg></div><div class="tx" style="left:51px;top:357px">CPU Package</div><div class="vv" style="left:305px;top:357px">95 °C</div><div class="vv" style="left:405px;top:357px">85 °C</div><div class="vv" style="left:505px;top:357px;color:#a01010">101 °C</div><div class="vv" style="left:605px;top:357px">94 °C</div><div class="rb" style="top:378px;left:49px;width:657px"></div><div class="rs" style="top:398px;left:29px;width:676px"></div><div class="hl" style="top:378px"></div><div class="ic" style="left:35px;top:380px"><svg width="8" height="18" viewBox="0 0 8 18"><rect x="2.6" y="0.5" width="2.8" height="12" rx="1.4" fill="#dcdcdc"/><rect x="3.2" y="5" width="1.6" height="9" fill="#8c0a0a"/><circle cx="4" cy="14.6" r="2.5" fill="#7a0000"/></svg></div><div class="tx" style="left:51px;top:378px">CPU IA Cores</div><div class="vv" style="left:305px;top:378px">95 °C</div><div class="vv" style="left:405px;top:378px">85 °C</div><div class="vv" style="left:505px;top:378px;color:#a01010">101 °C</div><div class="vv" style="left:605px;top:378px">94 °C</div><div class="rs" style="top:419px;left:29px;width:676px"></div><div class="ic" style="left:35px;top:401px"><svg width="8" height="18" viewBox="0 0 8 18"><rect x="2.6" y="0.5" width="2.8" height="12" rx="1.4" fill="#dcdcdc"/><rect x="3.2" y="5" width="1.6" height="9" fill="#8c0a0a"/><circle cx="4" cy="14.6" r="2.5" fill="#7a0000"/></svg></div><div class="tx" style="left:51px;top:399px">CPU GT Cores (Graphics)</div><div class="vv" style="left:305px;top:399px">81 °C</div><div class="vv" style="left:405px;top:399px">78 °C</div><div class="vv" style="left:505px;top:399px">82 °C</div><div class="vv" style="left:605px;top:399px">81 °C</div><div class="rb" style="top:420px;left:69px;width:637px"></div><div class="rs" style="top:440px;left:49px;width:656px"></div><div class="ic" style="left:32px;top:420px"><svg width="10" height="18" viewBox="0 0 10 18"><path d="M0.6,2.4 L7.8,10 L0.6,17.6" fill="none" stroke="#404050" stroke-width="1.1"/></svg></div><div class="ic" style="left:52px;top:420px"><svg width="14" height="20" viewBox="0 0 14 20"><path d="M7.6,0 L12.2,0 L8.9,7.3 L12.2,7.3 L1.3,19.8 L5.0,10.1 L1.7,10.1 Z" fill="#eba545"/></svg></div><div class="tx" style="left:71px;top:420px">Voltage Offsets</div><div class="vv" style="left:405px;top:420px">0.000 V</div><div class="vv" style="left:505px;top:420px">0.000 V</div><div class="rs" style="top:461px;left:29px;width:676px"></div><div class="hl" style="top:441px"></div><div class="ic" style="left:32px;top:441px"><svg width="14" height="20" viewBox="0 0 14 20"><path d="M7.6,0 L12.2,0 L8.9,7.3 L12.2,7.3 L1.3,19.8 L5.0,10.1 L1.7,10.1 Z" fill="#eba545"/></svg></div><div class="tx" style="left:51px;top:441px">VR VCC Current (SVID IOUT)</div><div class="vv" style="left:305px;top:441px">18.563 A</div><div class="vv" style="left:405px;top:441px">0.000 A</div><div class="vv" style="left:505px;top:441px">61.876 A</div><div class="vv" style="left:605px;top:441px">27.140 A</div><div class="rb" style="top:462px;left:49px;width:657px"></div><div class="rs" style="top:482px;left:29px;width:676px"></div><div class="hl" style="top:462px"></div><div class="ic" style="left:32px;top:462px"><svg width="14" height="20" viewBox="0 0 14 20"><path d="M7.6,0 L12.2,0 L8.9,7.3 L12.2,7.3 L1.3,19.8 L5.0,10.1 L1.7,10.1 Z" fill="#eba545"/></svg></div><div class="tx" style="left:51px;top:462px">CPU Package Power</div><div class="vv" style="left:305px;top:462px">43.056 W</div><div class="vv" style="left:405px;top:462px">28.771 W</div><div class="vv" style="left:505px;top:462px">62.754 W</div><div class="vv" style="left:605px;top:462px">43.377 W</div><div class="rs" style="top:503px;left:29px;width:676px"></div><div class="hl" style="top:483px"></div><div class="ic" style="left:32px;top:483px"><svg width="14" height="20" viewBox="0 0 14 20"><path d="M7.6,0 L12.2,0 L8.9,7.3 L12.2,7.3 L1.3,19.8 L5.0,10.1 L1.7,10.1 Z" fill="#eba545"/></svg></div><div class="tx" style="left:51px;top:483px">IA Cores Power</div><div class="vv" style="left:305px;top:483px">34.197 W</div><div class="vv" style="left:405px;top:483px">19.598 W</div><div class="vv" style="left:505px;top:483px">53.920 W</div><div class="vv" style="left:605px;top:483px">34.461 W</div><div class="rb" style="top:504px;left:49px;width:657px"></div><div class="rs" style="top:524px;left:29px;width:676px"></div><div class="ic" style="left:32px;top:504px"><svg width="14" height="20" viewBox="0 0 14 20"><path d="M7.6,0 L12.2,0 L8.9,7.3 L12.2,7.3 L1.3,19.8 L5.0,10.1 L1.7,10.1 Z" fill="#eba545"/></svg></div><div class="tx" style="left:51px;top:504px">GT Cores Power</div><div class="vv" style="left:305px;top:504px">0.000 W</div><div class="vv" style="left:405px;top:504px">0.000 W</div><div class="vv" style="left:505px;top:504px">0.000 W</div><div class="vv" style="left:605px;top:504px">0.000 W</div><div class="rs" style="top:545px;left:29px;width:676px"></div><div class="hl" style="top:525px"></div><div class="ic" style="left:32px;top:525px"><svg width="14" height="20" viewBox="0 0 14 20"><path d="M7.6,0 L12.2,0 L8.9,7.3 L12.2,7.3 L1.3,19.8 L5.0,10.1 L1.7,10.1 Z" fill="#eba545"/></svg></div><div class="tx" style="left:51px;top:525px">System Agent Power</div><div class="vv" style="left:305px;top:525px">3.649 W</div><div class="vv" style="left:405px;top:525px">3.555 W</div><div class="vv" style="left:505px;top:525px">3.795 W</div><div class="vv" style="left:605px;top:525px">3.678 W</div><div class="rb" style="top:546px;left:49px;width:657px"></div><div class="rs" style="top:566px;left:29px;width:676px"></div><div class="ic" style="left:32px;top:546px"><svg width="14" height="20" viewBox="0 0 14 20"><path d="M7.6,0 L12.2,0 L8.9,7.3 L12.2,7.3 L1.3,19.8 L5.0,10.1 L1.7,10.1 Z" fill="#eba545"/></svg></div><div class="tx" style="left:51px;top:546px">Rest-of-Chip Power</div><div class="vv" style="left:305px;top:546px">0.000 W</div><div class="vv" style="left:405px;top:546px">0.000 W</div><div class="vv" style="left:505px;top:546px">0.001 W</div><div class="vv" style="left:605px;top:546px">0.000 W</div><div class="rs" style="top:587px;left:29px;width:676px"></div><div class="ic" style="left:32px;top:567px"><svg width="14" height="20" viewBox="0 0 14 20"><path d="M7.6,0 L12.2,0 L8.9,7.3 L12.2,7.3 L1.3,19.8 L5.0,10.1 L1.7,10.1 Z" fill="#eba545"/></svg></div><div class="tx" style="left:51px;top:567px">PCH Power</div><div class="vv" style="left:305px;top:567px">0.000 W</div><div class="vv" style="left:405px;top:567px">0.000 W</div><div class="vv" style="left:505px;top:567px">0.002 W</div><div class="vv" style="left:605px;top:567px">0.000 W</div><div class="rb" style="top:588px;left:49px;width:657px"></div><div class="rs" style="top:608px;left:29px;width:676px"></div><div class="ic" style="left:32px;top:588px"><svg width="14" height="20" viewBox="0 0 14 20"><path d="M7.6,0 L12.2,0 L8.9,7.3 L12.2,7.3 L1.3,19.8 L5.0,10.1 L1.7,10.1 Z" fill="#eba545"/></svg></div><div class="tx" style="left:51px;top:588px">PL1 Power Limit (Static)</div><div class="vv" style="left:305px;top:588px">175.0 W</div><div class="vv" style="left:405px;top:588px">175.0 W</div><div class="vv" style="left:505px;top:588px">175.0 W</div><div class="vv" style="left:605px;top:588px">175.0 W</div><div class="rs" style="top:629px;left:29px;width:676px"></div><div class="ic" style="left:32px;top:609px"><svg width="14" height="20" viewBox="0 0 14 20"><path d="M7.6,0 L12.2,0 L8.9,7.3 L12.2,7.3 L1.3,19.8 L5.0,10.1 L1.7,10.1 Z" fill="#eba545"/></svg></div><div class="tx" style="left:51px;top:609px">PL1 Power Limit (Dynamic)</div><div class="vv" style="left:305px;top:609px">45.0 W</div><div class="vv" style="left:405px;top:609px">45.0 W</div><div class="vv" style="left:505px;top:609px">65.0 W</div><div class="vv" style="left:605px;top:609px">45.0 W</div><div class="rb" style="top:630px;left:49px;width:657px"></div><div class="rs" style="top:650px;left:29px;width:676px"></div><div class="ic" style="left:32px;top:630px"><svg width="14" height="20" viewBox="0 0 14 20"><path d="M7.6,0 L12.2,0 L8.9,7.3 L12.2,7.3 L1.3,19.8 L5.0,10.1 L1.7,10.1 Z" fill="#eba545"/></svg></div><div class="tx" style="left:51px;top:630px">PL2 Power Limit (Static)</div><div class="vv" style="left:305px;top:630px">175.0 W</div><div class="vv" style="left:405px;top:630px">175.0 W</div><div class="vv" style="left:505px;top:630px">175.0 W</div><div class="vv" style="left:605px;top:630px">175.0 W</div><div class="rs" style="top:671px;left:29px;width:676px"></div><div class="ic" style="left:32px;top:651px"><svg width="14" height="20" viewBox="0 0 14 20"><path d="M7.6,0 L12.2,0 L8.9,7.3 L12.2,7.3 L1.3,19.8 L5.0,10.1 L1.7,10.1 Z" fill="#eba545"/></svg></div><div class="tx" style="left:51px;top:651px">PL2 Power Limit (Dynamic)</div><div class="vv" style="left:305px;top:651px">175.0 W</div><div class="vv" style="left:405px;top:651px">175.0 W</div><div class="vv" style="left:505px;top:651px">175.0 W</div><div class="vv" style="left:605px;top:651px">175.0 W</div><div class="rb" style="top:672px;left:49px;width:657px"></div><div class="rs" style="top:692px;left:29px;width:676px"></div><div class="hl" style="top:672px"></div><div class="ic" style="left:32px;top:672px"><svg width="16" height="20" viewBox="0 0 16 20"><path d="M10.69,5.35 A6.2,6.2 0 1 0 12.53,12.22" fill="none" stroke="#2c3548" stroke-width="1.3"/><path d="M10.6,4.0 L14.1,3.9 L13.7,7.4 Z" fill="#2c3548"/><path d="M7.3,6.1 V10.6 L9.7,13" fill="none" stroke="#3a4256" stroke-width="1.1"/></svg></div><div class="tx" style="left:51px;top:672px">GPU Clock</div><div class="vv" style="left:305px;top:672px">1,645.9 MHz</div><div class="vv" style="left:405px;top:672px">1,645.6 MHz</div><div class="vv" style="left:505px;top:672px">1,646.4 MHz</div><div class="vv" style="left:605px;top:672px">1,646.0 MHz</div><div class="rs" style="top:713px;left:29px;width:676px"></div><div class="ic" style="left:32px;top:693px"><svg width="16" height="20" viewBox="0 0 16 20"><path d="M10.69,5.35 A6.2,6.2 0 1 0 12.53,12.22" fill="none" stroke="#2c3548" stroke-width="1.3"/><path d="M10.6,4.0 L14.1,3.9 L13.7,7.4 Z" fill="#2c3548"/><path d="M7.3,6.1 V10.6 L9.7,13" fill="none" stroke="#3a4256" stroke-width="1.1"/></svg></div><div class="tx" style="left:51px;top:693px">GPU D3D Usage</div><div class="vv" style="left:305px;top:693px">0.0 %</div><div class="vv" style="left:405px;top:693px">0.0 %</div><div class="vv" style="left:505px;top:693px">0.0 %</div><div class="vv" style="left:605px;top:693px">0.0 %</div><div class="rb" style="top:714px;left:49px;width:657px"></div><div class="rg" style="top:735px"></div><div class="ic" style="left:8px;top:741px"><svg width="18" height="10" viewBox="0 0 18 10"><path d="M1,1 L9,8.6 L17,1" fill="none" stroke="#3c3c4a" stroke-width="1.2"/></svg></div><div class="ic" style="left:31px;top:737px"><svg width="16" height="18" viewBox="0 0 16 18"><rect x="3" y="0.5" width="10" height="17" fill="#4c4a5c"/><g fill="#b0b0b8"><rect x="0.8" y="2" width="1.6" height="1.6"/><rect x="0.8" y="6" width="1.6" height="1.6"/><rect x="0.8" y="10" width="1.6" height="1.6"/><rect x="0.8" y="14" width="1.6" height="1.6"/><rect x="13.6" y="2" width="1.6" height="1.6"/><rect x="13.6" y="6" width="1.6" height="1.6"/><rect x="13.6" y="10" width="1.6" height="1.6"/><rect x="13.6" y="14" width="1.6" height="1.6"/></g></svg></div><div class="gt" style="left:50px;top:737px">GPU [#2]: NVIDIA GeForce RTX 5090 Laptop</div><div class="rb" style="top:756px;left:49px;width:657px"></div><div class="rs" style="top:776px;left:29px;width:676px"></div><div class="hl" style="top:756px"></div><div class="ic" style="left:35px;top:758px"><svg width="8" height="18" viewBox="0 0 8 18"><rect x="2.6" y="0.5" width="2.8" height="12" rx="1.4" fill="#dcdcdc"/><rect x="3.2" y="5" width="1.6" height="9" fill="#8c0a0a"/><circle cx="4" cy="14.6" r="2.5" fill="#7a0000"/></svg></div><div class="tx" style="left:51px;top:756px">GPU Temperature</div><div class="vv" style="left:305px;top:756px">85.5 °C</div><div class="vv" style="left:405px;top:756px">83.3 °C</div><div class="vv" style="left:505px;top:756px">87.8 °C</div><div class="vv" style="left:605px;top:756px">85.9 °C</div><div class="rs" style="top:797px;left:29px;width:676px"></div><div class="hl" style="top:777px"></div><div class="ic" style="left:35px;top:779px"><svg width="8" height="18" viewBox="0 0 8 18"><rect x="2.6" y="0.5" width="2.8" height="12" rx="1.4" fill="#dcdcdc"/><rect x="3.2" y="5" width="1.6" height="9" fill="#8c0a0a"/><circle cx="4" cy="14.6" r="2.5" fill="#7a0000"/></svg></div><div class="tx" style="left:51px;top:777px">GPU Memory Junction Temperature</div><div class="vv" style="left:305px;top:777px">84.0 °C</div><div class="vv" style="left:405px;top:777px">84.0 °C</div><div class="vv" style="left:505px;top:777px">86.0 °C</div><div class="vv" style="left:605px;top:777px">85.2 °C</div><div class="rb" style="top:798px;left:49px;width:657px"></div><div class="rs" style="top:818px;left:29px;width:676px"></div><div class="ic" style="left:35px;top:800px"><svg width="8" height="18" viewBox="0 0 8 18"><rect x="2.6" y="0.5" width="2.8" height="12" rx="1.4" fill="#dcdcdc"/><rect x="3.2" y="5" width="1.6" height="9" fill="#8c0a0a"/><circle cx="4" cy="14.6" r="2.5" fill="#7a0000"/></svg></div><div class="tx" style="left:51px;top:798px">GPU Thermal Limit</div><div class="vv" style="left:305px;top:798px">87.0 °C</div><div class="vv" style="left:405px;top:798px">87.0 °C</div><div class="vv" style="left:505px;top:798px">87.0 °C</div><div class="vv" style="left:605px;top:798px">87.0 °C</div><div class="rs" style="top:839px;left:29px;width:676px"></div><div class="hl" style="top:819px"></div><div class="ic" style="left:32px;top:819px"><svg width="14" height="20" viewBox="0 0 14 20"><path d="M7.6,0 L12.2,0 L8.9,7.3 L12.2,7.3 L1.3,19.8 L5.0,10.1 L1.7,10.1 Z" fill="#eba545"/></svg></div><div class="tx" style="left:51px;top:819px">GPU Core Voltage</div><div class="vv" style="left:305px;top:819px">0.800 V</div><div class="vv" style="left:405px;top:819px">0.750 V</div><div class="vv" style="left:505px;top:819px">0.830 V</div><div class="vv" style="left:605px;top:819px">0.792 V</div><div class="rb" style="top:840px;left:69px;width:637px"></div><div class="rs" style="top:860px;left:49px;width:656px"></div><div class="ic" style="left:32px;top:840px"><svg width="10" height="18" viewBox="0 0 10 18"><path d="M0.6,2.4 L7.8,10 L0.6,17.6" fill="none" stroke="#404050" stroke-width="1.1"/></svg></div><div class="ic" style="left:52px;top:840px"><svg width="14" height="20" viewBox="0 0 14 20"><path d="M7.6,0 L12.2,0 L8.9,7.3 L12.2,7.3 L1.3,19.8 L5.0,10.1 L1.7,10.1 Z" fill="#eba545"/></svg></div><div class="tx" style="left:71px;top:840px">GPU Rail Voltages</div><div class="vv" style="left:405px;top:840px">0.645 V</div><div class="vv" style="left:505px;top:840px">19.601 V</div><div class="rs" style="top:881px;left:29px;width:676px"></div><div class="hl" style="top:861px"></div><div class="ic" style="left:32px;top:861px"><svg width="14" height="20" viewBox="0 0 14 20"><path d="M7.6,0 L12.2,0 L8.9,7.3 L12.2,7.3 L1.3,19.8 L5.0,10.1 L1.7,10.1 Z" fill="#eba545"/></svg></div><div class="tx" style="left:51px;top:861px">GPU Power (Total)</div><div class="vv" style="left:305px;top:861px">131.529 W</div><div class="vv" style="left:405px;top:861px">78.224 W</div><div class="vv" style="left:505px;top:861px">191.210 W</div><div class="vv" style="left:605px;top:861px">142.761 W</div><div class="rb" style="top:882px;left:69px;width:637px"></div><div class="rs" style="top:902px;left:49px;width:656px"></div><div class="ic" style="left:32px;top:882px"><svg width="10" height="18" viewBox="0 0 10 18"><path d="M0.6,2.4 L7.8,10 L0.6,17.6" fill="none" stroke="#404050" stroke-width="1.1"/></svg></div><div class="ic" style="left:52px;top:882px"><svg width="14" height="20" viewBox="0 0 14 20"><path d="M7.6,0 L12.2,0 L8.9,7.3 L12.2,7.3 L1.3,19.8 L5.0,10.1 L1.7,10.1 Z" fill="#eba545"/></svg></div><div class="tx" style="left:71px;top:882px">GPU Rail Powers</div><div class="vv" style="left:405px;top:882px">0.000 W</div><div class="vv" style="left:505px;top:882px">184.366 W</div><div class="rs" style="top:923px;left:29px;width:676px"></div><div class="hl" style="top:903px"></div><div class="ic" style="left:32px;top:903px"><svg width="16" height="20" viewBox="0 0 16 20"><path d="M10.69,5.35 A6.2,6.2 0 1 0 12.53,12.22" fill="none" stroke="#2c3548" stroke-width="1.3"/><path d="M10.6,4.0 L14.1,3.9 L13.7,7.4 Z" fill="#2c3548"/><path d="M7.3,6.1 V10.6 L9.7,13" fill="none" stroke="#3a4256" stroke-width="1.1"/></svg></div><div class="tx" style="left:51px;top:903px">GPU Clock</div><div class="vv" style="left:305px;top:903px">1,972.0 MHz</div><div class="vv" style="left:405px;top:903px">1,462.0 MHz</div><div class="vv" style="left:505px;top:903px">2,085.0 MHz</div><div class="vv" style="left:605px;top:903px">1,944.4 MHz</div><div class="rb" style="top:924px;left:49px;width:657px"></div><div class="rs" style="top:944px;left:29px;width:676px"></div><div class="ic" style="left:32px;top:924px"><svg width="16" height="20" viewBox="0 0 16 20"><path d="M10.69,5.35 A6.2,6.2 0 1 0 12.53,12.22" fill="none" stroke="#2c3548" stroke-width="1.3"/><path d="M10.6,4.0 L14.1,3.9 L13.7,7.4 Z" fill="#2c3548"/><path d="M7.3,6.1 V10.6 L9.7,13" fill="none" stroke="#3a4256" stroke-width="1.1"/></svg></div><div class="tx" style="left:51px;top:924px">GPU Memory Clock</div><div class="vv" style="left:305px;top:924px">1,375.1 MHz</div><div class="vv" style="left:405px;top:924px">1,375.1 MHz</div><div class="vv" style="left:505px;top:924px">1,750.1 MHz</div><div class="vv" style="left:605px;top:924px">1,377.0 MHz</div><div class="rs" style="top:965px;left:29px;width:676px"></div><div class="hl" style="top:945px"></div><div class="ic" style="left:32px;top:945px"><svg width="16" height="20" viewBox="0 0 16 20"><path d="M10.69,5.35 A6.2,6.2 0 1 0 12.53,12.22" fill="none" stroke="#2c3548" stroke-width="1.3"/><path d="M10.6,4.0 L14.1,3.9 L13.7,7.4 Z" fill="#2c3548"/><path d="M7.3,6.1 V10.6 L9.7,13" fill="none" stroke="#3a4256" stroke-width="1.1"/></svg></div><div class="tx" style="left:51px;top:945px">GPU Video Clock</div><div class="vv" style="left:305px;top:945px">1,822.0 MHz</div><div class="vv" style="left:405px;top:945px">1,605.0 MHz</div><div class="vv" style="left:505px;top:945px">1,912.0 MHz</div><div class="vv" style="left:605px;top:945px">1,789.0 MHz</div><div class="rb" style="top:966px;left:49px;width:657px"></div><div class="rs" style="top:986px;left:29px;width:676px"></div><div class="hl" style="top:966px"></div><div class="ic" style="left:32px;top:966px"><svg width="16" height="20" viewBox="0 0 16 20"><path d="M10.69,5.35 A6.2,6.2 0 1 0 12.53,12.22" fill="none" stroke="#2c3548" stroke-width="1.3"/><path d="M10.6,4.0 L14.1,3.9 L13.7,7.4 Z" fill="#2c3548"/><path d="M7.3,6.1 V10.6 L9.7,13" fill="none" stroke="#3a4256" stroke-width="1.1"/></svg></div><div class="tx" style="left:51px;top:966px">GPU Effective Clock</div><div class="vv" style="left:305px;top:966px">1,970.5 MHz</div><div class="vv" style="left:405px;top:966px">1,798.9 MHz</div><div class="vv" style="left:505px;top:966px">2,079.8 MHz</div><div class="vv" style="left:605px;top:966px">1,947.1 MHz</div><div class="rs" style="top:1007px;left:29px;width:676px"></div><div class="hl" style="top:987px"></div><div class="ic" style="left:32px;top:987px"><svg width="16" height="20" viewBox="0 0 16 20"><path d="M10.69,5.35 A6.2,6.2 0 1 0 12.53,12.22" fill="none" stroke="#2c3548" stroke-width="1.3"/><path d="M10.6,4.0 L14.1,3.9 L13.7,7.4 Z" fill="#2c3548"/><path d="M7.3,6.1 V10.6 L9.7,13" fill="none" stroke="#3a4256" stroke-width="1.1"/></svg></div><div class="tx" style="left:51px;top:987px">GPU Crossbar Clock</div><div class="vv" style="left:305px;top:987px">1,890.0 MHz</div><div class="vv" style="left:405px;top:987px">1,642.0 MHz</div><div class="vv" style="left:505px;top:987px">1,995.0 MHz</div><div class="vv" style="left:605px;top:987px">1,857.3 MHz</div><div class="rb" style="top:1008px;left:49px;width:657px"></div><div class="rs" style="top:1028px;left:29px;width:676px"></div><div class="hl" style="top:1008px"></div><div class="ic" style="left:32px;top:1008px"><svg width="16" height="20" viewBox="0 0 16 20"><path d="M10.69,5.35 A6.2,6.2 0 1 0 12.53,12.22" fill="none" stroke="#2c3548" stroke-width="1.3"/><path d="M10.6,4.0 L14.1,3.9 L13.7,7.4 Z" fill="#2c3548"/><path d="M7.3,6.1 V10.6 L9.7,13" fill="none" stroke="#3a4256" stroke-width="1.1"/></svg></div><div class="tx" style="left:51px;top:1008px">GPU Core Load</div><div class="vv" style="left:305px;top:1008px">97.0 %</div><div class="vv" style="left:405px;top:1008px">68.0 %</div><div class="vv" style="left:505px;top:1008px">98.0 %</div><div class="vv" style="left:605px;top:1008px">97.5 %</div><div class="rs" style="top:1049px;left:29px;width:676px"></div><div class="hl" style="top:1029px"></div><div class="ic" style="left:32px;top:1029px"><svg width="16" height="20" viewBox="0 0 16 20"><path d="M10.69,5.35 A6.2,6.2 0 1 0 12.53,12.22" fill="none" stroke="#2c3548" stroke-width="1.3"/><path d="M10.6,4.0 L14.1,3.9 L13.7,7.4 Z" fill="#2c3548"/><path d="M7.3,6.1 V10.6 L9.7,13" fill="none" stroke="#3a4256" stroke-width="1.1"/></svg></div><div class="tx" style="left:51px;top:1029px">GPU Memory Controller Load</div><div class="vv" style="left:305px;top:1029px">34.0 %</div><div class="vv" style="left:405px;top:1029px">23.0 %</div><div class="vv" style="left:505px;top:1029px">36.0 %</div><div class="vv" style="left:605px;top:1029px">33.7 %</div><div class="rb" style="top:1050px;left:49px;width:657px"></div><div class="rs" style="top:1070px;left:29px;width:676px"></div><div class="ic" style="left:32px;top:1050px"><svg width="16" height="20" viewBox="0 0 16 20"><path d="M10.69,5.35 A6.2,6.2 0 1 0 12.53,12.22" fill="none" stroke="#2c3548" stroke-width="1.3"/><path d="M10.6,4.0 L14.1,3.9 L13.7,7.4 Z" fill="#2c3548"/><path d="M7.3,6.1 V10.6 L9.7,13" fill="none" stroke="#3a4256" stroke-width="1.1"/></svg></div><div class="tx" style="left:51px;top:1050px">GPU Video Engine Load</div><div class="vv" style="left:305px;top:1050px">0.0 %</div><div class="vv" style="left:405px;top:1050px">0.0 %</div><div class="vv" style="left:505px;top:1050px">0.0 %</div><div class="vv" style="left:605px;top:1050px">0.0 %</div><div class="rs" style="top:1091px;left:29px;width:676px"></div><div class="ic" style="left:32px;top:1071px"><svg width="16" height="20" viewBox="0 0 16 20"><path d="M10.69,5.35 A6.2,6.2 0 1 0 12.53,12.22" fill="none" stroke="#2c3548" stroke-width="1.3"/><path d="M10.6,4.0 L14.1,3.9 L13.7,7.4 Z" fill="#2c3548"/><path d="M7.3,6.1 V10.6 L9.7,13" fill="none" stroke="#3a4256" stroke-width="1.1"/></svg></div><div class="tx" style="left:51px;top:1071px">GPU Bus Load</div><div class="vv" style="left:305px;top:1071px">100.0 %</div><div class="vv" style="left:405px;top:1071px">94.0 %</div><div class="vv" style="left:505px;top:1071px">100.0 %</div><div class="vv" style="left:605px;top:1071px">100.0 %</div><div class="rb" style="top:1092px;left:49px;width:657px"></div><div class="rs" style="top:1112px;left:29px;width:676px"></div><div class="hl" style="top:1092px"></div><div class="ic" style="left:32px;top:1092px"><svg width="16" height="20" viewBox="0 0 16 20"><path d="M10.69,5.35 A6.2,6.2 0 1 0 12.53,12.22" fill="none" stroke="#2c3548" stroke-width="1.3"/><path d="M10.6,4.0 L14.1,3.9 L13.7,7.4 Z" fill="#2c3548"/><path d="M7.3,6.1 V10.6 L9.7,13" fill="none" stroke="#3a4256" stroke-width="1.1"/></svg></div><div class="tx" style="left:51px;top:1092px">GPU Memory Usage</div><div class="vv" style="left:305px;top:1092px">33.6 %</div><div class="vv" style="left:405px;top:1092px">33.0 %</div><div class="vv" style="left:505px;top:1092px">34.4 %</div><div class="vv" style="left:605px;top:1092px">33.6 %</div><div class="rg" style="top:1134px"></div><div class="ic" style="left:8px;top:1140px"><svg width="18" height="10" viewBox="0 0 18 10"><path d="M1,1 L9,8.6 L17,1" fill="none" stroke="#3c3c4a" stroke-width="1.2"/></svg></div><div class="ic" style="left:31px;top:1136px"><svg width="16" height="18" viewBox="0 0 16 18"><rect x="3" y="0.5" width="10" height="17" fill="#4c4a5c"/><g fill="#b0b0b8"><rect x="0.8" y="2" width="1.6" height="1.6"/><rect x="0.8" y="6" width="1.6" height="1.6"/><rect x="0.8" y="10" width="1.6" height="1.6"/><rect x="0.8" y="14" width="1.6" height="1.6"/><rect x="13.6" y="2" width="1.6" height="1.6"/><rect x="13.6" y="6" width="1.6" height="1.6"/><rect x="13.6" y="10" width="1.6" height="1.6"/><rect x="13.6" y="14" width="1.6" height="1.6"/></g></svg></div><div class="gt" style="left:50px;top:1136px">Battery: AS3GYFG3KC R220358</div><div class="rs" style="top:1175px;left:29px;width:676px"></div><div class="hl" style="top:1155px"></div><div class="ic" style="left:32px;top:1155px"><svg width="14" height="20" viewBox="0 0 14 20"><path d="M7.6,0 L12.2,0 L8.9,7.3 L12.2,7.3 L1.3,19.8 L5.0,10.1 L1.7,10.1 Z" fill="#eba545"/></svg></div><div class="tx" style="left:51px;top:1155px">Battery Voltage</div><div class="vv" style="left:305px;top:1155px">17.360 V</div><div class="vv" style="left:405px;top:1155px">17.304 V</div><div class="vv" style="left:505px;top:1155px">17.376 V</div><div class="vv" style="left:605px;top:1155px">17.363 V</div><div class="rb" style="top:1176px;left:49px;width:657px"></div><div class="rs" style="top:1196px;left:29px;width:676px"></div><div class="ic" style="left:32px;top:1176px"><svg width="16" height="20" viewBox="0 0 16 20"><path d="M10.69,5.35 A6.2,6.2 0 1 0 12.53,12.22" fill="none" stroke="#2c3548" stroke-width="1.3"/><path d="M10.6,4.0 L14.1,3.9 L13.7,7.4 Z" fill="#2c3548"/><path d="M7.3,6.1 V10.6 L9.7,13" fill="none" stroke="#3a4256" stroke-width="1.1"/></svg></div><div class="tx" style="left:51px;top:1176px">Remaining Capacity</div><div class="vv" style="left:305px;top:1176px">84.518 Wh</div><div class="vv" style="left:405px;top:1176px">84.518 Wh</div><div class="vv" style="left:505px;top:1176px">84.518 Wh</div><div class="vv" style="left:605px;top:1176px">84.518 Wh</div><div class="rs" style="top:1217px;left:29px;width:676px"></div><div class="ic" style="left:32px;top:1197px"><svg width="16" height="20" viewBox="0 0 16 20"><path d="M10.69,5.35 A6.2,6.2 0 1 0 12.53,12.22" fill="none" stroke="#2c3548" stroke-width="1.3"/><path d="M10.6,4.0 L14.1,3.9 L13.7,7.4 Z" fill="#2c3548"/><path d="M7.3,6.1 V10.6 L9.7,13" fill="none" stroke="#3a4256" stroke-width="1.1"/></svg></div><div class="tx" style="left:51px;top:1197px">Charge Level</div><div class="vv" style="left:305px;top:1197px">100.0 %</div><div class="vv" style="left:405px;top:1197px">100.0 %</div><div class="vv" style="left:505px;top:1197px">100.0 %</div><div class="vv" style="left:605px;top:1197px">100.0 %</div><div class="rb" style="top:1218px;left:49px;width:657px"></div><div class="rs" style="top:1238px;left:29px;width:676px"></div><div class="ic" style="left:32px;top:1218px"><svg width="16" height="20" viewBox="0 0 16 20"><path d="M10.69,5.35 A6.2,6.2 0 1 0 12.53,12.22" fill="none" stroke="#2c3548" stroke-width="1.3"/><path d="M10.6,4.0 L14.1,3.9 L13.7,7.4 Z" fill="#2c3548"/><path d="M7.3,6.1 V10.6 L9.7,13" fill="none" stroke="#3a4256" stroke-width="1.1"/></svg></div><div class="tx" style="left:51px;top:1218px">Charge Rate</div><div class="vv" style="left:305px;top:1218px">0.000 W</div><div class="vv" style="left:405px;top:1218px">0.000 W</div><div class="vv" style="left:505px;top:1218px">0.000 W</div><div class="vv" style="left:605px;top:1218px">0.000 W</div><div class="rs" style="top:1259px;left:29px;width:676px"></div><div class="ic" style="left:32px;top:1239px"><svg width="16" height="20" viewBox="0 0 16 20"><path d="M10.69,5.35 A6.2,6.2 0 1 0 12.53,12.22" fill="none" stroke="#2c3548" stroke-width="1.3"/><path d="M10.6,4.0 L14.1,3.9 L13.7,7.4 Z" fill="#2c3548"/><path d="M7.3,6.1 V10.6 L9.7,13" fill="none" stroke="#3a4256" stroke-width="1.1"/></svg></div><div class="tx" style="left:51px;top:1239px">Wear Level</div><div class="vv" style="left:305px;top:1239px">6.1 %</div><div class="vv" style="left:405px;top:1239px">6.1 %</div><div class="vv" style="left:505px;top:1239px">6.1 %</div><div class="vv" style="left:605px;top:1239px">6.1 %</div><div class="rb" style="top:1260px;left:49px;width:657px"></div><div class="rg" style="top:1281px"></div><div class="ic" style="left:8px;top:1287px"><svg width="18" height="10" viewBox="0 0 18 10"><path d="M1,1 L9,8.6 L17,1" fill="none" stroke="#3c3c4a" stroke-width="1.2"/></svg></div><div class="ic" style="left:31px;top:1283px"><svg width="16" height="18" viewBox="0 0 16 18"><rect x="3" y="0.5" width="10" height="17" fill="#4c4a5c"/><g fill="#b0b0b8"><rect x="0.8" y="2" width="1.6" height="1.6"/><rect x="0.8" y="6" width="1.6" height="1.6"/><rect x="0.8" y="10" width="1.6" height="1.6"/><rect x="0.8" y="14" width="1.6" height="1.6"/><rect x="13.6" y="2" width="1.6" height="1.6"/><rect x="13.6" y="6" width="1.6" height="1.6"/><rect x="13.6" y="10" width="1.6" height="1.6"/><rect x="13.6" y="14" width="1.6" height="1.6"/></g></svg></div><div class="gt" style="left:50px;top:1283px">RTSS</div><div class="rb" style="top:1302px;left:49px;width:657px"></div><div class="rs" style="top:1322px;left:29px;width:676px"></div><div class="hl" style="top:1302px"></div><div class="ic" style="left:32px;top:1302px"><svg width="16" height="20" viewBox="0 0 16 20"><path d="M10.69,5.35 A6.2,6.2 0 1 0 12.53,12.22" fill="none" stroke="#2c3548" stroke-width="1.3"/><path d="M10.6,4.0 L14.1,3.9 L13.7,7.4 Z" fill="#2c3548"/><path d="M7.3,6.1 V10.6 L9.7,13" fill="none" stroke="#3a4256" stroke-width="1.1"/></svg></div><div class="tx" style="left:51px;top:1302px">Framerate</div><div class="vv" style="left:305px;top:1302px">118 FPS</div><div class="vv" style="left:405px;top:1302px">0 FPS</div><div class="vv" style="left:505px;top:1302px">128 FPS</div><div class="vv" style="left:605px;top:1302px">119 FPS</div><div class="rs" style="top:1343px;left:29px;width:676px"></div><div class="ic" style="left:32px;top:1323px"><svg width="16" height="20" viewBox="0 0 16 20"><path d="M10.69,5.35 A6.2,6.2 0 1 0 12.53,12.22" fill="none" stroke="#2c3548" stroke-width="1.3"/><path d="M10.6,4.0 L14.1,3.9 L13.7,7.4 Z" fill="#2c3548"/><path d="M7.3,6.1 V10.6 L9.7,13" fill="none" stroke="#3a4256" stroke-width="1.1"/></svg></div><div class="tx" style="left:51px;top:1323px">Framerate 1% Low</div><div class="vv" style="left:305px;top:1323px">52 FPS</div><div class="vv" style="left:405px;top:1323px">27 FPS</div><div class="vv" style="left:505px;top:1323px">52 FPS</div><div class="vv" style="left:605px;top:1323px">51 FPS</div><div class="rb" style="top:1344px;left:49px;width:657px"></div><div class="rs" style="top:1364px;left:29px;width:676px"></div><div class="ic" style="left:32px;top:1344px"><svg width="16" height="20" viewBox="0 0 16 20"><path d="M10.69,5.35 A6.2,6.2 0 1 0 12.53,12.22" fill="none" stroke="#2c3548" stroke-width="1.3"/><path d="M10.6,4.0 L14.1,3.9 L13.7,7.4 Z" fill="#2c3548"/><path d="M7.3,6.1 V10.6 L9.7,13" fill="none" stroke="#3a4256" stroke-width="1.1"/></svg></div><div class="tx" style="left:51px;top:1344px">Framerate 0.1% Low</div><div class="vv" style="left:305px;top:1344px">0 FPS</div><div class="vv" style="left:405px;top:1344px">0 FPS</div><div class="vv" style="left:505px;top:1344px">0 FPS</div><div class="vv" style="left:605px;top:1344px">0 FPS</div><div class="rs" style="top:1385px;left:29px;width:676px"></div><div class="hl" style="top:1365px"></div><div class="ic" style="left:32px;top:1365px"><svg width="16" height="20" viewBox="0 0 16 20"><path d="M10.69,5.35 A6.2,6.2 0 1 0 12.53,12.22" fill="none" stroke="#2c3548" stroke-width="1.3"/><path d="M10.6,4.0 L14.1,3.9 L13.7,7.4 Z" fill="#2c3548"/><path d="M7.3,6.1 V10.6 L9.7,13" fill="none" stroke="#3a4256" stroke-width="1.1"/></svg></div><div class="tx" style="left:51px;top:1365px">Frame Time</div><div class="vv" style="left:305px;top:1365px">0.3 ms</div><div class="vv" style="left:405px;top:1365px">0.2 ms</div><div class="vv" style="left:505px;top:1365px">19.1 ms</div><div class="vv" style="left:605px;top:1365px">0.7 ms</div><div class="rb" style="top:1386px;left:49px;width:657px"></div></div><div class="tip" style="left:293px;top:733px;width:98px;height:45px;padding-top:2px;padding-left:6px">1,980.0 MHz<br>12:49:26</div><div class="tip" style="left:623px;top:990px;width:67px;height:45px;padding-top:2px;padding-left:5px">85.0 °C<br>12:53:06</div><div class="tip" style="left:997px;top:1167px;width:86px;height:45px;padding-top:2px">136.180 W<br>12:57:14</div><div class="ovl">Gaming - Cyberpunk - Performance, on desk</div></body></html>
